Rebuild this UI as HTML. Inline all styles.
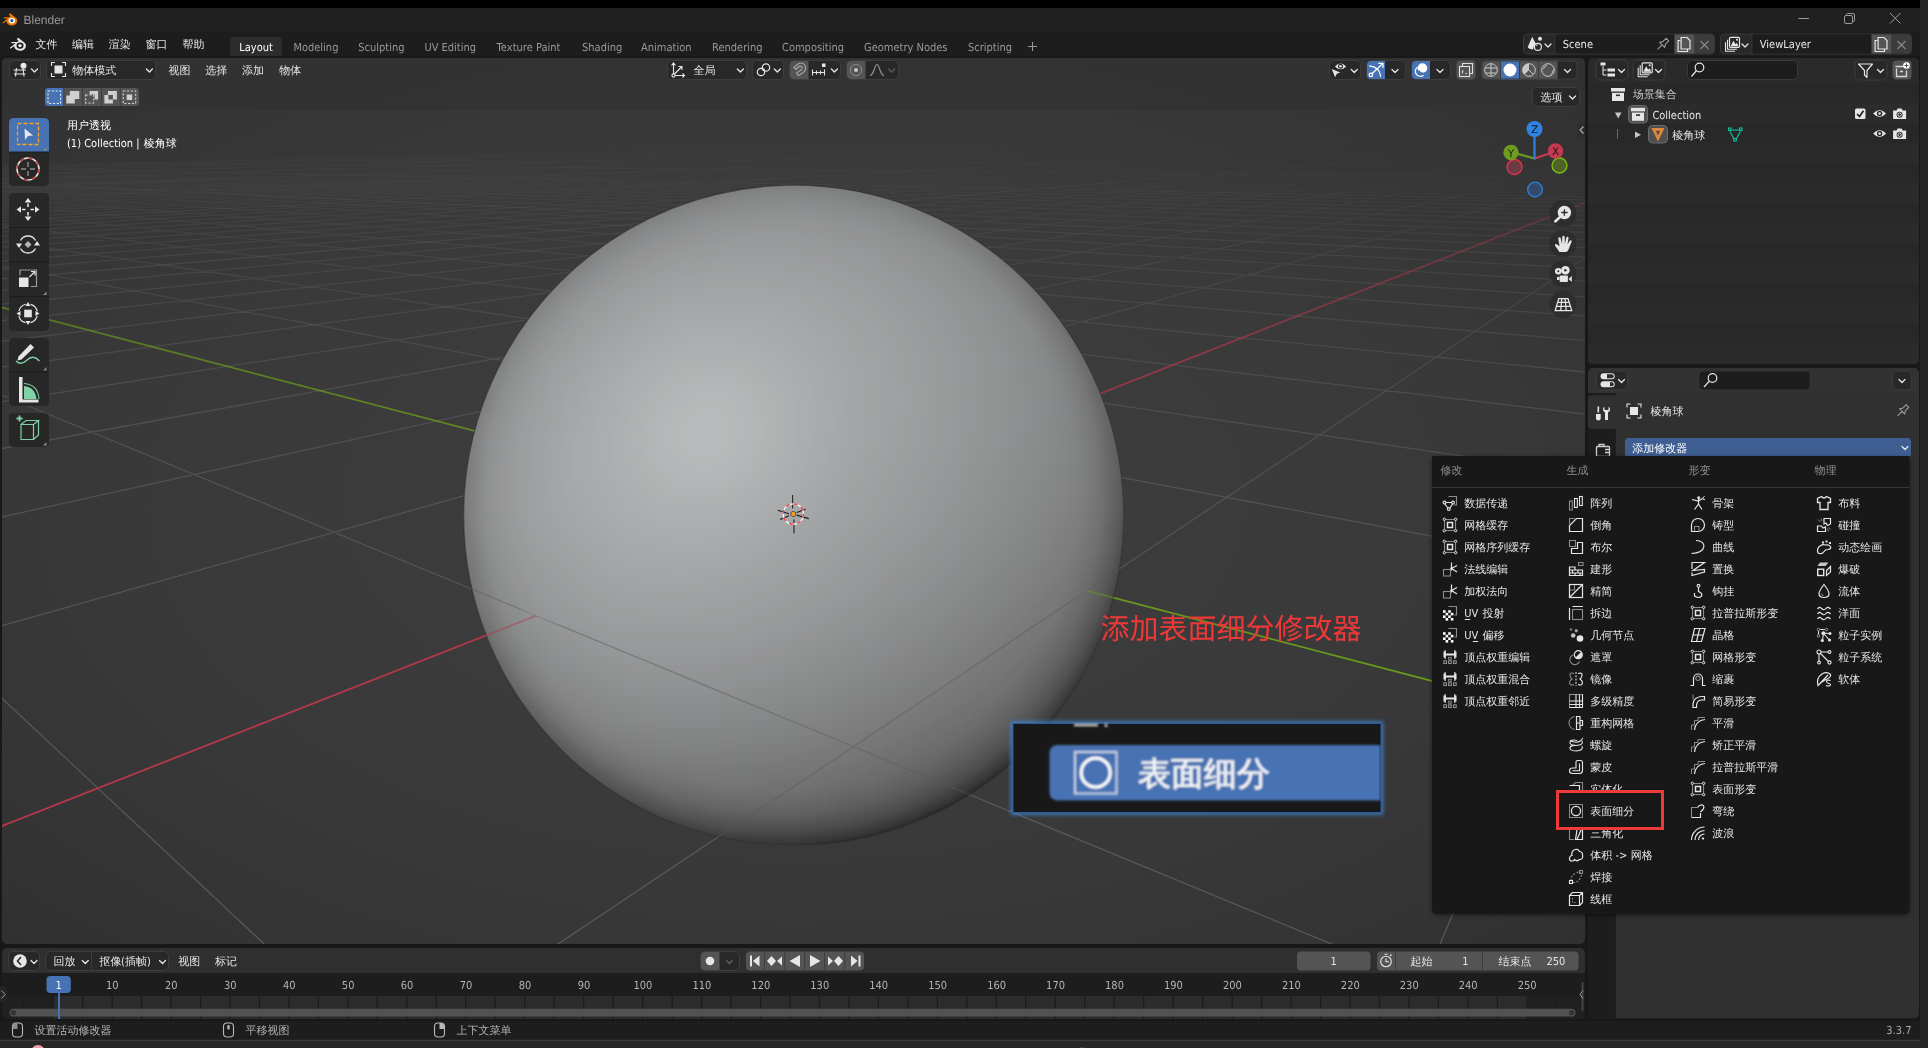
<!DOCTYPE html><html lang="zh"><head><meta charset="utf-8"><title>Blender</title><style>
*{box-sizing:border-box;margin:0;padding:0}
html,body{width:1928px;height:1048px;overflow:hidden;background:#000}
body{position:relative;font-family:"DejaVu Sans","Liberation Sans","WenQuanYi Zen Hei","Noto Sans CJK SC",sans-serif;font-size:11px;color:#e6e6e6;line-height:1}
.a{position:absolute}
.t{position:absolute;white-space:nowrap;line-height:14px;height:14px}
svg{position:absolute;left:0;top:0;overflow:visible;will-change:opacity}
text{text-rendering:geometricPrecision}

</style></head><body>
<div class="a" style="left:0;top:8px;width:1920px;height:23px;background:#202020"></div>
<div class="a" style="left:0;top:31px;width:1920px;height:1009px;background:#181818"></div>
<div class="a" style="left:0;top:31px;width:1920px;height:25px;background:#1d1d1d"></div>
<div class="a" style="left:1920px;top:0;width:8px;height:1048px;background:#262626"></div>
<div class="a" style="left:0;top:1040px;width:1928px;height:8px;background:#262626"></div>
<svg width="1928" height="1048" viewBox="0 0 1928 1048"><defs>
<linearGradient id="gA" gradientUnits="userSpaceOnUse" x1="799.94" y1="38.04" x2="787.09" y2="961.96"><stop offset="0.0000" stop-color="#fff" stop-opacity="0.000"/><stop offset="0.1234" stop-color="#fff" stop-opacity="0.002"/><stop offset="0.1299" stop-color="#fff" stop-opacity="0.012"/><stop offset="0.1364" stop-color="#fff" stop-opacity="0.028"/><stop offset="0.1429" stop-color="#fff" stop-opacity="0.047"/><stop offset="0.1494" stop-color="#fff" stop-opacity="0.068"/><stop offset="0.1558" stop-color="#fff" stop-opacity="0.090"/><stop offset="0.1623" stop-color="#fff" stop-opacity="0.157"/><stop offset="0.1688" stop-color="#fff" stop-opacity="0.174"/><stop offset="0.1753" stop-color="#fff" stop-opacity="0.191"/><stop offset="0.1818" stop-color="#fff" stop-opacity="0.208"/><stop offset="0.1883" stop-color="#fff" stop-opacity="0.225"/><stop offset="0.1948" stop-color="#fff" stop-opacity="0.242"/><stop offset="0.2013" stop-color="#fff" stop-opacity="0.258"/><stop offset="0.2078" stop-color="#fff" stop-opacity="0.274"/><stop offset="0.2143" stop-color="#fff" stop-opacity="0.290"/><stop offset="0.2208" stop-color="#fff" stop-opacity="0.306"/><stop offset="0.2273" stop-color="#fff" stop-opacity="0.321"/><stop offset="0.2338" stop-color="#fff" stop-opacity="0.337"/><stop offset="0.2403" stop-color="#fff" stop-opacity="0.352"/><stop offset="0.2468" stop-color="#fff" stop-opacity="0.366"/><stop offset="0.2532" stop-color="#fff" stop-opacity="0.381"/><stop offset="0.2597" stop-color="#fff" stop-opacity="0.395"/><stop offset="0.2662" stop-color="#fff" stop-opacity="0.409"/><stop offset="0.2727" stop-color="#fff" stop-opacity="0.423"/><stop offset="0.2792" stop-color="#fff" stop-opacity="0.437"/><stop offset="0.2857" stop-color="#fff" stop-opacity="0.450"/><stop offset="0.2922" stop-color="#fff" stop-opacity="0.463"/><stop offset="0.2987" stop-color="#fff" stop-opacity="0.476"/><stop offset="0.3052" stop-color="#fff" stop-opacity="0.489"/><stop offset="0.3117" stop-color="#fff" stop-opacity="0.501"/><stop offset="0.3182" stop-color="#fff" stop-opacity="0.513"/><stop offset="0.3247" stop-color="#fff" stop-opacity="0.525"/><stop offset="0.3312" stop-color="#fff" stop-opacity="0.537"/><stop offset="0.3377" stop-color="#fff" stop-opacity="0.549"/><stop offset="0.3442" stop-color="#fff" stop-opacity="0.560"/><stop offset="0.3506" stop-color="#fff" stop-opacity="0.572"/><stop offset="0.3571" stop-color="#fff" stop-opacity="0.582"/><stop offset="0.3636" stop-color="#fff" stop-opacity="0.593"/><stop offset="0.3701" stop-color="#fff" stop-opacity="0.604"/><stop offset="0.3766" stop-color="#fff" stop-opacity="0.614"/><stop offset="0.3831" stop-color="#fff" stop-opacity="0.624"/><stop offset="0.3896" stop-color="#fff" stop-opacity="0.634"/><stop offset="0.3961" stop-color="#fff" stop-opacity="0.644"/><stop offset="0.4026" stop-color="#fff" stop-opacity="0.654"/><stop offset="0.4091" stop-color="#fff" stop-opacity="0.663"/><stop offset="0.4156" stop-color="#fff" stop-opacity="0.672"/><stop offset="0.4221" stop-color="#fff" stop-opacity="0.681"/><stop offset="0.4286" stop-color="#fff" stop-opacity="0.690"/><stop offset="0.4351" stop-color="#fff" stop-opacity="0.698"/><stop offset="0.4416" stop-color="#fff" stop-opacity="0.707"/><stop offset="0.4481" stop-color="#fff" stop-opacity="0.715"/><stop offset="0.4545" stop-color="#fff" stop-opacity="0.723"/><stop offset="0.4610" stop-color="#fff" stop-opacity="0.731"/><stop offset="0.4675" stop-color="#fff" stop-opacity="0.738"/><stop offset="0.4740" stop-color="#fff" stop-opacity="0.746"/><stop offset="0.4805" stop-color="#fff" stop-opacity="0.753"/><stop offset="0.4870" stop-color="#fff" stop-opacity="0.760"/><stop offset="0.4935" stop-color="#fff" stop-opacity="0.767"/><stop offset="0.5000" stop-color="#fff" stop-opacity="0.774"/><stop offset="0.5065" stop-color="#fff" stop-opacity="0.781"/><stop offset="0.5130" stop-color="#fff" stop-opacity="0.787"/><stop offset="0.5195" stop-color="#fff" stop-opacity="0.794"/><stop offset="0.5260" stop-color="#fff" stop-opacity="0.800"/><stop offset="0.5325" stop-color="#fff" stop-opacity="0.806"/><stop offset="0.5390" stop-color="#fff" stop-opacity="0.812"/><stop offset="0.5455" stop-color="#fff" stop-opacity="0.818"/><stop offset="0.5519" stop-color="#fff" stop-opacity="0.823"/><stop offset="0.5584" stop-color="#fff" stop-opacity="0.829"/><stop offset="0.5649" stop-color="#fff" stop-opacity="0.834"/><stop offset="0.5714" stop-color="#fff" stop-opacity="0.839"/><stop offset="0.5779" stop-color="#fff" stop-opacity="0.844"/><stop offset="0.5844" stop-color="#fff" stop-opacity="0.849"/><stop offset="0.5909" stop-color="#fff" stop-opacity="0.854"/><stop offset="0.5974" stop-color="#fff" stop-opacity="0.858"/><stop offset="0.6039" stop-color="#fff" stop-opacity="0.863"/><stop offset="0.6104" stop-color="#fff" stop-opacity="0.867"/><stop offset="0.6169" stop-color="#fff" stop-opacity="0.872"/><stop offset="0.6234" stop-color="#fff" stop-opacity="0.876"/><stop offset="0.6299" stop-color="#fff" stop-opacity="0.880"/><stop offset="0.6364" stop-color="#fff" stop-opacity="0.884"/><stop offset="0.6429" stop-color="#fff" stop-opacity="0.888"/><stop offset="0.6494" stop-color="#fff" stop-opacity="0.891"/><stop offset="0.6558" stop-color="#fff" stop-opacity="0.895"/><stop offset="0.6623" stop-color="#fff" stop-opacity="0.898"/><stop offset="0.6688" stop-color="#fff" stop-opacity="0.902"/><stop offset="0.6753" stop-color="#fff" stop-opacity="0.905"/><stop offset="0.6818" stop-color="#fff" stop-opacity="0.908"/><stop offset="0.6883" stop-color="#fff" stop-opacity="0.911"/><stop offset="0.6948" stop-color="#fff" stop-opacity="0.914"/><stop offset="0.7013" stop-color="#fff" stop-opacity="0.917"/><stop offset="0.7078" stop-color="#fff" stop-opacity="0.920"/><stop offset="0.7143" stop-color="#fff" stop-opacity="0.923"/><stop offset="0.7208" stop-color="#fff" stop-opacity="0.925"/><stop offset="0.7273" stop-color="#fff" stop-opacity="0.928"/><stop offset="0.7338" stop-color="#fff" stop-opacity="0.931"/><stop offset="0.7403" stop-color="#fff" stop-opacity="0.933"/><stop offset="0.7468" stop-color="#fff" stop-opacity="0.935"/><stop offset="0.7532" stop-color="#fff" stop-opacity="0.938"/><stop offset="0.7597" stop-color="#fff" stop-opacity="0.940"/><stop offset="0.7662" stop-color="#fff" stop-opacity="0.942"/><stop offset="0.7727" stop-color="#fff" stop-opacity="0.944"/><stop offset="0.7792" stop-color="#fff" stop-opacity="0.946"/><stop offset="0.7857" stop-color="#fff" stop-opacity="0.948"/><stop offset="0.7922" stop-color="#fff" stop-opacity="0.950"/><stop offset="0.7987" stop-color="#fff" stop-opacity="0.952"/><stop offset="0.8052" stop-color="#fff" stop-opacity="0.953"/><stop offset="0.8117" stop-color="#fff" stop-opacity="0.955"/><stop offset="0.8182" stop-color="#fff" stop-opacity="0.957"/><stop offset="0.8247" stop-color="#fff" stop-opacity="0.958"/><stop offset="0.8312" stop-color="#fff" stop-opacity="0.960"/><stop offset="0.8377" stop-color="#fff" stop-opacity="0.961"/><stop offset="0.8442" stop-color="#fff" stop-opacity="0.963"/><stop offset="0.8506" stop-color="#fff" stop-opacity="0.964"/><stop offset="0.8571" stop-color="#fff" stop-opacity="0.965"/><stop offset="0.8636" stop-color="#fff" stop-opacity="0.967"/><stop offset="0.8701" stop-color="#fff" stop-opacity="0.968"/><stop offset="0.8766" stop-color="#fff" stop-opacity="0.969"/><stop offset="0.8831" stop-color="#fff" stop-opacity="0.970"/><stop offset="0.8896" stop-color="#fff" stop-opacity="0.971"/><stop offset="0.8961" stop-color="#fff" stop-opacity="0.973"/><stop offset="0.9026" stop-color="#fff" stop-opacity="0.974"/><stop offset="0.9091" stop-color="#fff" stop-opacity="0.975"/><stop offset="0.9156" stop-color="#fff" stop-opacity="0.976"/><stop offset="0.9221" stop-color="#fff" stop-opacity="0.977"/><stop offset="0.9351" stop-color="#fff" stop-opacity="0.978"/><stop offset="0.9416" stop-color="#fff" stop-opacity="0.979"/><stop offset="0.9481" stop-color="#fff" stop-opacity="0.980"/><stop offset="0.9545" stop-color="#fff" stop-opacity="0.981"/><stop offset="0.9675" stop-color="#fff" stop-opacity="0.982"/><stop offset="0.9740" stop-color="#fff" stop-opacity="0.983"/><stop offset="0.9805" stop-color="#fff" stop-opacity="0.984"/><stop offset="0.9935" stop-color="#fff" stop-opacity="0.985"/><stop offset="1.0000" stop-color="#fff" stop-opacity="0.985"/></linearGradient>
<linearGradient id="gB" gradientUnits="userSpaceOnUse" x1="799.94" y1="38.04" x2="787.09" y2="961.96"><stop offset="0.0000" stop-color="#fff" stop-opacity="0.000"/><stop offset="0.1104" stop-color="#fff" stop-opacity="0.008"/><stop offset="0.1169" stop-color="#fff" stop-opacity="0.028"/><stop offset="0.1234" stop-color="#fff" stop-opacity="0.047"/><stop offset="0.1299" stop-color="#fff" stop-opacity="0.066"/><stop offset="0.1364" stop-color="#fff" stop-opacity="0.084"/><stop offset="0.1429" stop-color="#fff" stop-opacity="0.103"/><stop offset="0.1494" stop-color="#fff" stop-opacity="0.121"/><stop offset="0.1558" stop-color="#fff" stop-opacity="0.139"/><stop offset="0.1623" stop-color="#fff" stop-opacity="0.157"/><stop offset="0.1688" stop-color="#fff" stop-opacity="0.174"/><stop offset="0.1753" stop-color="#fff" stop-opacity="0.191"/><stop offset="0.1818" stop-color="#fff" stop-opacity="0.208"/><stop offset="0.1883" stop-color="#fff" stop-opacity="0.225"/><stop offset="0.1948" stop-color="#fff" stop-opacity="0.242"/><stop offset="0.2013" stop-color="#fff" stop-opacity="0.258"/><stop offset="0.2078" stop-color="#fff" stop-opacity="0.274"/><stop offset="0.2143" stop-color="#fff" stop-opacity="0.290"/><stop offset="0.2208" stop-color="#fff" stop-opacity="0.306"/><stop offset="0.2273" stop-color="#fff" stop-opacity="0.321"/><stop offset="0.2338" stop-color="#fff" stop-opacity="0.337"/><stop offset="0.2403" stop-color="#fff" stop-opacity="0.352"/><stop offset="0.2468" stop-color="#fff" stop-opacity="0.366"/><stop offset="0.2532" stop-color="#fff" stop-opacity="0.381"/><stop offset="0.2597" stop-color="#fff" stop-opacity="0.395"/><stop offset="0.2662" stop-color="#fff" stop-opacity="0.409"/><stop offset="0.2727" stop-color="#fff" stop-opacity="0.423"/><stop offset="0.2792" stop-color="#fff" stop-opacity="0.437"/><stop offset="0.2857" stop-color="#fff" stop-opacity="0.450"/><stop offset="0.2922" stop-color="#fff" stop-opacity="0.463"/><stop offset="0.2987" stop-color="#fff" stop-opacity="0.476"/><stop offset="0.3052" stop-color="#fff" stop-opacity="0.489"/><stop offset="0.3117" stop-color="#fff" stop-opacity="0.501"/><stop offset="0.3182" stop-color="#fff" stop-opacity="0.513"/><stop offset="0.3247" stop-color="#fff" stop-opacity="0.525"/><stop offset="0.3312" stop-color="#fff" stop-opacity="0.537"/><stop offset="0.3377" stop-color="#fff" stop-opacity="0.549"/><stop offset="0.3442" stop-color="#fff" stop-opacity="0.560"/><stop offset="0.3506" stop-color="#fff" stop-opacity="0.572"/><stop offset="0.3571" stop-color="#fff" stop-opacity="0.582"/><stop offset="0.3636" stop-color="#fff" stop-opacity="0.593"/><stop offset="0.3701" stop-color="#fff" stop-opacity="0.604"/><stop offset="0.3766" stop-color="#fff" stop-opacity="0.614"/><stop offset="0.3831" stop-color="#fff" stop-opacity="0.624"/><stop offset="0.3896" stop-color="#fff" stop-opacity="0.634"/><stop offset="0.3961" stop-color="#fff" stop-opacity="0.644"/><stop offset="0.4026" stop-color="#fff" stop-opacity="0.654"/><stop offset="0.4091" stop-color="#fff" stop-opacity="0.663"/><stop offset="0.4156" stop-color="#fff" stop-opacity="0.672"/><stop offset="0.4221" stop-color="#fff" stop-opacity="0.681"/><stop offset="0.4286" stop-color="#fff" stop-opacity="0.690"/><stop offset="0.4351" stop-color="#fff" stop-opacity="0.698"/><stop offset="0.4416" stop-color="#fff" stop-opacity="0.707"/><stop offset="0.4481" stop-color="#fff" stop-opacity="0.715"/><stop offset="0.4545" stop-color="#fff" stop-opacity="0.723"/><stop offset="0.4610" stop-color="#fff" stop-opacity="0.731"/><stop offset="0.4675" stop-color="#fff" stop-opacity="0.738"/><stop offset="0.4740" stop-color="#fff" stop-opacity="0.746"/><stop offset="0.4805" stop-color="#fff" stop-opacity="0.753"/><stop offset="0.4870" stop-color="#fff" stop-opacity="0.760"/><stop offset="0.4935" stop-color="#fff" stop-opacity="0.767"/><stop offset="0.5000" stop-color="#fff" stop-opacity="0.774"/><stop offset="0.5065" stop-color="#fff" stop-opacity="0.781"/><stop offset="0.5130" stop-color="#fff" stop-opacity="0.787"/><stop offset="0.5195" stop-color="#fff" stop-opacity="0.794"/><stop offset="0.5260" stop-color="#fff" stop-opacity="0.800"/><stop offset="0.5325" stop-color="#fff" stop-opacity="0.806"/><stop offset="0.5390" stop-color="#fff" stop-opacity="0.812"/><stop offset="0.5455" stop-color="#fff" stop-opacity="0.818"/><stop offset="0.5519" stop-color="#fff" stop-opacity="0.823"/><stop offset="0.5584" stop-color="#fff" stop-opacity="0.829"/><stop offset="0.5649" stop-color="#fff" stop-opacity="0.834"/><stop offset="0.5714" stop-color="#fff" stop-opacity="0.839"/><stop offset="0.5779" stop-color="#fff" stop-opacity="0.844"/><stop offset="0.5844" stop-color="#fff" stop-opacity="0.849"/><stop offset="0.5909" stop-color="#fff" stop-opacity="0.854"/><stop offset="0.5974" stop-color="#fff" stop-opacity="0.858"/><stop offset="0.6039" stop-color="#fff" stop-opacity="0.863"/><stop offset="0.6104" stop-color="#fff" stop-opacity="0.867"/><stop offset="0.6169" stop-color="#fff" stop-opacity="0.872"/><stop offset="0.6234" stop-color="#fff" stop-opacity="0.876"/><stop offset="0.6299" stop-color="#fff" stop-opacity="0.880"/><stop offset="0.6364" stop-color="#fff" stop-opacity="0.884"/><stop offset="0.6429" stop-color="#fff" stop-opacity="0.888"/><stop offset="0.6494" stop-color="#fff" stop-opacity="0.891"/><stop offset="0.6558" stop-color="#fff" stop-opacity="0.895"/><stop offset="0.6623" stop-color="#fff" stop-opacity="0.898"/><stop offset="0.6688" stop-color="#fff" stop-opacity="0.902"/><stop offset="0.6753" stop-color="#fff" stop-opacity="0.905"/><stop offset="0.6818" stop-color="#fff" stop-opacity="0.908"/><stop offset="0.6883" stop-color="#fff" stop-opacity="0.911"/><stop offset="0.6948" stop-color="#fff" stop-opacity="0.914"/><stop offset="0.7013" stop-color="#fff" stop-opacity="0.917"/><stop offset="0.7078" stop-color="#fff" stop-opacity="0.920"/><stop offset="0.7143" stop-color="#fff" stop-opacity="0.923"/><stop offset="0.7208" stop-color="#fff" stop-opacity="0.925"/><stop offset="0.7273" stop-color="#fff" stop-opacity="0.928"/><stop offset="0.7338" stop-color="#fff" stop-opacity="0.931"/><stop offset="0.7403" stop-color="#fff" stop-opacity="0.933"/><stop offset="0.7468" stop-color="#fff" stop-opacity="0.935"/><stop offset="0.7532" stop-color="#fff" stop-opacity="0.938"/><stop offset="0.7597" stop-color="#fff" stop-opacity="0.940"/><stop offset="0.7662" stop-color="#fff" stop-opacity="0.942"/><stop offset="0.7727" stop-color="#fff" stop-opacity="0.944"/><stop offset="0.7792" stop-color="#fff" stop-opacity="0.946"/><stop offset="0.7857" stop-color="#fff" stop-opacity="0.948"/><stop offset="0.7922" stop-color="#fff" stop-opacity="0.950"/><stop offset="0.7987" stop-color="#fff" stop-opacity="0.952"/><stop offset="0.8052" stop-color="#fff" stop-opacity="0.953"/><stop offset="0.8117" stop-color="#fff" stop-opacity="0.955"/><stop offset="0.8182" stop-color="#fff" stop-opacity="0.957"/><stop offset="0.8247" stop-color="#fff" stop-opacity="0.958"/><stop offset="0.8312" stop-color="#fff" stop-opacity="0.960"/><stop offset="0.8377" stop-color="#fff" stop-opacity="0.961"/><stop offset="0.8442" stop-color="#fff" stop-opacity="0.963"/><stop offset="0.8506" stop-color="#fff" stop-opacity="0.964"/><stop offset="0.8571" stop-color="#fff" stop-opacity="0.965"/><stop offset="0.8636" stop-color="#fff" stop-opacity="0.967"/><stop offset="0.8701" stop-color="#fff" stop-opacity="0.968"/><stop offset="0.8766" stop-color="#fff" stop-opacity="0.969"/><stop offset="0.8831" stop-color="#fff" stop-opacity="0.970"/><stop offset="0.8896" stop-color="#fff" stop-opacity="0.971"/><stop offset="0.8961" stop-color="#fff" stop-opacity="0.973"/><stop offset="0.9026" stop-color="#fff" stop-opacity="0.974"/><stop offset="0.9091" stop-color="#fff" stop-opacity="0.975"/><stop offset="0.9156" stop-color="#fff" stop-opacity="0.976"/><stop offset="0.9221" stop-color="#fff" stop-opacity="0.977"/><stop offset="0.9351" stop-color="#fff" stop-opacity="0.978"/><stop offset="0.9416" stop-color="#fff" stop-opacity="0.979"/><stop offset="0.9481" stop-color="#fff" stop-opacity="0.980"/><stop offset="0.9545" stop-color="#fff" stop-opacity="0.981"/><stop offset="0.9675" stop-color="#fff" stop-opacity="0.982"/><stop offset="0.9740" stop-color="#fff" stop-opacity="0.983"/><stop offset="0.9805" stop-color="#fff" stop-opacity="0.984"/><stop offset="0.9935" stop-color="#fff" stop-opacity="0.985"/><stop offset="1.0000" stop-color="#fff" stop-opacity="0.985"/></linearGradient>
<linearGradient id="gC" gradientUnits="userSpaceOnUse" x1="799.94" y1="38.04" x2="787.09" y2="961.96"><stop offset="0.0000" stop-color="#fff" stop-opacity="0.000"/><stop offset="0.1104" stop-color="#fff" stop-opacity="0.029"/><stop offset="0.1169" stop-color="#fff" stop-opacity="0.071"/><stop offset="0.1234" stop-color="#fff" stop-opacity="0.106"/><stop offset="0.1299" stop-color="#fff" stop-opacity="0.136"/><stop offset="0.1364" stop-color="#fff" stop-opacity="0.164"/><stop offset="0.1429" stop-color="#fff" stop-opacity="0.191"/><stop offset="0.1494" stop-color="#fff" stop-opacity="0.215"/><stop offset="0.1558" stop-color="#fff" stop-opacity="0.239"/><stop offset="0.1623" stop-color="#fff" stop-opacity="0.261"/><stop offset="0.1688" stop-color="#fff" stop-opacity="0.283"/><stop offset="0.1753" stop-color="#fff" stop-opacity="0.304"/><stop offset="0.1818" stop-color="#fff" stop-opacity="0.324"/><stop offset="0.1883" stop-color="#fff" stop-opacity="0.343"/><stop offset="0.1948" stop-color="#fff" stop-opacity="0.362"/><stop offset="0.2013" stop-color="#fff" stop-opacity="0.380"/><stop offset="0.2078" stop-color="#fff" stop-opacity="0.398"/><stop offset="0.2143" stop-color="#fff" stop-opacity="0.415"/><stop offset="0.2208" stop-color="#fff" stop-opacity="0.432"/><stop offset="0.2273" stop-color="#fff" stop-opacity="0.448"/><stop offset="0.2338" stop-color="#fff" stop-opacity="0.464"/><stop offset="0.2403" stop-color="#fff" stop-opacity="0.479"/><stop offset="0.2468" stop-color="#fff" stop-opacity="0.494"/><stop offset="0.2532" stop-color="#fff" stop-opacity="0.509"/><stop offset="0.2597" stop-color="#fff" stop-opacity="0.523"/><stop offset="0.2662" stop-color="#fff" stop-opacity="0.537"/><stop offset="0.2727" stop-color="#fff" stop-opacity="0.551"/><stop offset="0.2792" stop-color="#fff" stop-opacity="0.564"/><stop offset="0.2857" stop-color="#fff" stop-opacity="0.577"/><stop offset="0.2922" stop-color="#fff" stop-opacity="0.589"/><stop offset="0.2987" stop-color="#fff" stop-opacity="0.602"/><stop offset="0.3052" stop-color="#fff" stop-opacity="0.614"/><stop offset="0.3117" stop-color="#fff" stop-opacity="0.625"/><stop offset="0.3182" stop-color="#fff" stop-opacity="0.637"/><stop offset="0.3247" stop-color="#fff" stop-opacity="0.648"/><stop offset="0.3312" stop-color="#fff" stop-opacity="0.659"/><stop offset="0.3377" stop-color="#fff" stop-opacity="0.670"/><stop offset="0.3442" stop-color="#fff" stop-opacity="0.680"/><stop offset="0.3506" stop-color="#fff" stop-opacity="0.690"/><stop offset="0.3571" stop-color="#fff" stop-opacity="0.700"/><stop offset="0.3636" stop-color="#fff" stop-opacity="0.710"/><stop offset="0.3701" stop-color="#fff" stop-opacity="0.719"/><stop offset="0.3766" stop-color="#fff" stop-opacity="0.728"/><stop offset="0.3831" stop-color="#fff" stop-opacity="0.737"/><stop offset="0.3896" stop-color="#fff" stop-opacity="0.746"/><stop offset="0.3961" stop-color="#fff" stop-opacity="0.755"/><stop offset="0.4026" stop-color="#fff" stop-opacity="0.763"/><stop offset="0.4091" stop-color="#fff" stop-opacity="0.771"/><stop offset="0.4156" stop-color="#fff" stop-opacity="0.779"/><stop offset="0.4221" stop-color="#fff" stop-opacity="0.787"/><stop offset="0.4286" stop-color="#fff" stop-opacity="0.795"/><stop offset="0.4351" stop-color="#fff" stop-opacity="0.802"/><stop offset="0.4416" stop-color="#fff" stop-opacity="0.809"/><stop offset="0.4481" stop-color="#fff" stop-opacity="0.816"/><stop offset="0.4545" stop-color="#fff" stop-opacity="0.823"/><stop offset="0.4610" stop-color="#fff" stop-opacity="0.830"/><stop offset="0.4675" stop-color="#fff" stop-opacity="0.836"/><stop offset="0.4740" stop-color="#fff" stop-opacity="0.843"/><stop offset="0.4805" stop-color="#fff" stop-opacity="0.849"/><stop offset="0.4870" stop-color="#fff" stop-opacity="0.855"/><stop offset="0.4935" stop-color="#fff" stop-opacity="0.861"/><stop offset="0.5000" stop-color="#fff" stop-opacity="0.867"/><stop offset="0.5065" stop-color="#fff" stop-opacity="0.872"/><stop offset="0.5130" stop-color="#fff" stop-opacity="0.878"/><stop offset="0.5195" stop-color="#fff" stop-opacity="0.883"/><stop offset="0.5260" stop-color="#fff" stop-opacity="0.888"/><stop offset="0.5325" stop-color="#fff" stop-opacity="0.893"/><stop offset="0.5390" stop-color="#fff" stop-opacity="0.898"/><stop offset="0.5455" stop-color="#fff" stop-opacity="0.903"/><stop offset="0.5519" stop-color="#fff" stop-opacity="0.907"/><stop offset="0.5584" stop-color="#fff" stop-opacity="0.912"/><stop offset="0.5649" stop-color="#fff" stop-opacity="0.916"/><stop offset="0.5714" stop-color="#fff" stop-opacity="0.921"/><stop offset="0.5779" stop-color="#fff" stop-opacity="0.925"/><stop offset="0.5844" stop-color="#fff" stop-opacity="0.929"/><stop offset="0.5909" stop-color="#fff" stop-opacity="0.933"/><stop offset="0.5974" stop-color="#fff" stop-opacity="0.936"/><stop offset="0.6039" stop-color="#fff" stop-opacity="0.940"/><stop offset="0.6104" stop-color="#fff" stop-opacity="0.944"/><stop offset="0.6169" stop-color="#fff" stop-opacity="0.947"/><stop offset="0.6234" stop-color="#fff" stop-opacity="0.951"/><stop offset="0.6299" stop-color="#fff" stop-opacity="0.954"/><stop offset="0.6364" stop-color="#fff" stop-opacity="0.957"/><stop offset="0.6429" stop-color="#fff" stop-opacity="0.960"/><stop offset="0.6494" stop-color="#fff" stop-opacity="0.963"/><stop offset="0.6558" stop-color="#fff" stop-opacity="0.966"/><stop offset="0.6623" stop-color="#fff" stop-opacity="0.969"/><stop offset="0.6688" stop-color="#fff" stop-opacity="0.972"/><stop offset="0.6753" stop-color="#fff" stop-opacity="0.974"/><stop offset="0.6818" stop-color="#fff" stop-opacity="0.977"/><stop offset="0.6883" stop-color="#fff" stop-opacity="0.979"/><stop offset="0.6948" stop-color="#fff" stop-opacity="0.982"/><stop offset="0.7013" stop-color="#fff" stop-opacity="0.984"/><stop offset="0.7078" stop-color="#fff" stop-opacity="0.986"/><stop offset="0.7143" stop-color="#fff" stop-opacity="0.989"/><stop offset="0.7208" stop-color="#fff" stop-opacity="0.991"/><stop offset="0.7273" stop-color="#fff" stop-opacity="0.993"/><stop offset="0.7338" stop-color="#fff" stop-opacity="0.995"/><stop offset="0.7403" stop-color="#fff" stop-opacity="0.997"/><stop offset="0.7468" stop-color="#fff" stop-opacity="0.999"/><stop offset="0.7532" stop-color="#fff" stop-opacity="1.000"/><stop offset="1.0000" stop-color="#fff" stop-opacity="1.000"/></linearGradient>
<mask id="mC" maskUnits="userSpaceOnUse" x="0" y="0" width="1928" height="1048"><rect x="0" y="0" width="1928" height="1048" fill="url(#gC)"/></mask>
<mask id="mA" maskUnits="userSpaceOnUse" x="0" y="0" width="1928" height="1048"><rect x="0" y="0" width="1928" height="1048" fill="url(#gA)"/></mask>
<mask id="mB" maskUnits="userSpaceOnUse" x="0" y="0" width="1928" height="1048"><rect x="0" y="0" width="1928" height="1048" fill="url(#gB)"/></mask>
<clipPath id="cSph"><ellipse cx="793.7" cy="515.4" rx="330.0" ry="330.1"/></clipPath>
<clipPath id="cFront"><polygon points="425.8,547.2 465.8,553.2 466.3,556.2 467.1,559.3 468.2,562.3 469.5,565.4 471.1,568.5 473.0,571.5 475.1,574.6 477.5,577.7 480.3,580.7 483.3,583.8 486.6,586.8 490.2,589.9 494.1,592.9 498.3,595.8 502.8,598.8 507.6,601.7 512.7,604.6 518.1,607.4 523.8,610.2 529.8,613.0 536.1,615.6 542.7,618.3 549.6,620.9 556.8,623.4 564.3,625.8 572.1,628.2 580.1,630.5 588.4,632.7 597.0,634.8 605.8,636.9 614.9,638.8 624.2,640.6 633.7,642.4 643.5,644.0 653.4,645.5 663.6,647.0 673.9,648.3 684.4,649.5 695.1,650.5 705.9,651.5 716.8,652.3 727.8,653.0 738.9,653.5 750.1,654.0 761.4,654.3 772.7,654.4 784.1,654.5 795.4,654.4 806.8,654.2 818.1,653.8 829.4,653.3 840.7,652.7 851.9,652.0 863.0,651.1 874.0,650.1 884.9,649.0 895.7,647.8 906.3,646.4 916.7,644.9 927.0,643.4 937.2,641.7 947.1,639.9 956.8,638.0 966.3,635.9 975.5,633.9 984.6,631.7 993.3,629.4 1001.8,627.0 1010.1,624.6 1018.1,622.1 1025.8,619.5 1033.2,616.8 1040.3,614.1 1047.2,611.4 1053.7,608.5 1060.0,605.7 1065.9,602.8 1071.6,599.8 1076.9,596.8 1081.9,593.8 1086.7,590.8 1091.1,587.7 1095.2,584.6 1099.1,581.5 1102.6,578.4 1105.8,575.2 1108.7,572.1 1111.4,569.0 1113.7,565.8 1115.8,562.7 1117.6,559.6 1119.1,556.5 1120.4,553.4 1121.3,550.3 1122.1,547.2 1122.5,544.2 1162.5,538.2 1182.5,954.0 405.8,954.0"/></clipPath>
<clipPath id="cView"><rect x="2" y="58" width="1583" height="886" rx="5"/></clipPath>
<radialGradient id="gBg" gradientUnits="userSpaceOnUse" cx="793.5" cy="501.0" r="1119.3" gradientTransform="translate(793.5 501.0) scale(1 0.5597) translate(-793.5 -501.0)"><stop offset="0" stop-color="#3d3d3d"/><stop offset="0.2" stop-color="#3d3d3d"/><stop offset="0.3" stop-color="#3c3c3c"/><stop offset="0.4" stop-color="#3b3b3b"/><stop offset="0.5" stop-color="#3a3a3a"/><stop offset="0.6" stop-color="#393939"/><stop offset="0.7" stop-color="#373737"/><stop offset="0.8" stop-color="#353535"/><stop offset="0.9" stop-color="#333333"/><stop offset="1" stop-color="#303030"/></radialGradient>
<radialGradient id="gSphR" gradientUnits="userSpaceOnUse" cx="781.7" cy="495.4" r="355.0"><stop offset="0.84" stop-color="#000" stop-opacity="0"/><stop offset="0.9" stop-color="#000" stop-opacity="0.06"/><stop offset="0.95" stop-color="#040302" stop-opacity="0.18"/><stop offset="0.98" stop-color="#080604" stop-opacity="0.36"/><stop offset="1" stop-color="#0a0806" stop-opacity="0.62"/></radialGradient>
</defs>
<g clip-path="url(#cView)">
<rect x="2" y="58" width="1583" height="886" fill="url(#gBg)"/>
<g mask="url(#mA)"><path id="pgA" d="M269.5 949.0L-3.0 693.6M1438.0 949.0L1590.0 588.2M1343.7 949.0L-3.0 393.1M550.5 949.0L1590.0 254.5M1590.0 566.0L-3.0 264.9M-3.0 627.1L1590.0 178.8M1590.0 474.7L-3.0 240.7M-3.0 518.0L1590.0 166.9M1590.0 414.8L-3.0 224.9M-3.0 449.4L1590.0 159.4M1590.0 372.5L-3.0 213.7M-3.0 402.3L1590.0 154.2M1590.0 341.0L-3.0 205.4M-3.0 367.9L1590.0 150.4M1590.0 316.6L-3.0 198.9M-3.0 341.8L1590.0 147.6M1590.0 297.3L-3.0 193.8M-3.0 321.2L1590.0 145.3M1590.0 281.5L-3.0 189.6M-3.0 304.6L1579.5 144.6M1590.0 268.3L-3.0 186.2M-3.0 290.9L1561.5 144.7M1590.0 247.8L-3.0 180.7M-3.0 269.6L1526.5 144.9M1590.0 239.6L-3.0 178.6M-3.0 261.2L1509.4 145.0M1590.0 232.5L-3.0 176.7M-3.0 253.9L1492.5 145.1M1590.0 226.1L-3.0 175.0M-3.0 247.4L1476.0 145.2M1590.0 220.6L-3.0 173.5M-3.0 241.8L1459.7 145.2M1590.0 215.6L-3.0 172.2M-3.0 236.7L1443.7 145.3M1590.0 211.1L-3.0 171.0M-3.0 232.2L1427.9 145.4M1590.0 207.0L-3.0 169.9M-3.0 228.1L1412.3 145.5M1590.0 203.3L-3.0 169.0M-3.0 224.3L1397.0 145.6M1590.0 196.8L-3.0 167.2M-3.0 217.9L1367.1 145.8M1590.0 194.0L-3.0 166.5M-3.0 215.0L1352.5 145.8M1590.0 191.4L5.8 165.9M-3.0 212.4L1338.1 145.9M1590.0 189.0L22.6 165.5M-3.0 210.0L1323.9 146.0M1590.0 186.7L39.1 165.2M-3.0 207.8L1310.0 146.1M1590.0 184.6L55.3 164.8M-3.0 205.7L1296.2 146.2M1590.0 182.7L71.2 164.4M-3.0 203.7L1282.6 146.2M1590.0 180.9L86.8 164.0M-3.0 201.9L1269.2 146.3M1590.0 179.1L102.2 163.7M-3.0 200.2L1256.0 146.4M1590.0 176.0L132.0 162.9M-3.0 197.1L1230.2 146.5M1590.0 174.6L146.5 162.6M-3.0 195.7L1217.6 146.6M1590.0 173.3L160.8 162.3M-3.0 194.4L1205.1 146.7M1590.0 172.0L174.9 161.9M-3.0 193.1L1192.9 146.7M1590.0 170.8L188.6 161.6M-3.0 191.9L1180.7 146.8M1590.0 169.6L202.2 161.3M-3.0 190.8L1168.8 146.9M1590.0 168.6L215.5 161.0M-3.0 189.7L1157.0 146.9M1590.0 167.5L228.6 160.7M-3.0 188.7L1145.4 147.0M1590.0 166.5L241.5 160.4M-3.0 187.7L1133.9 147.1M1590.0 164.7L266.7 159.8M-3.0 185.9L1111.4 147.2M1590.0 163.9L278.9 159.5M-3.0 185.1L1100.3 147.2M1590.0 163.0L291.0 159.2M-3.0 184.3L1089.4 147.3M1590.0 162.3L302.9 158.9M-3.0 183.5L1078.7 147.4M1590.0 161.5L314.6 158.6M-3.0 182.8L1068.1 147.4M1590.0 160.8L326.1 158.3M-3.0 182.1L1057.6 147.5M1590.0 160.1L337.4 158.1M-3.0 181.4L1047.3 147.5M1590.0 159.4L348.6 157.8M-3.0 180.8L1037.1 147.6M1590.0 158.8L359.6 157.6M-3.0 180.1L1027.0 147.7M1590.0 157.6L381.1 157.0M-3.0 179.0L1007.2 147.8M-3.0 178.4L997.5 147.8M-3.0 177.9L987.9 147.9M-3.0 177.3L978.4 147.9M-3.0 176.8L969.0 148.0M-3.0 176.4L959.8 148.0M-3.0 175.9L950.6 148.1M-3.0 175.4L941.6 148.1M-3.0 175.0L932.7 148.2M-3.0 174.2L915.1 148.3M-3.0 173.8L906.5 148.3M-3.0 173.4L898.0 148.4M-3.0 173.0L889.5 148.4M-3.0 172.7L881.2 148.5M-3.0 172.3L873.0 148.5M-3.0 172.0L864.8 148.6M-3.0 171.6L856.8 148.6M-3.0 171.3L848.8 148.7M-3.0 170.7L833.2 148.7M-3.0 170.4L825.5 148.8M-3.0 170.1L817.8 148.8M-3.0 169.8L810.3 148.9M-3.0 169.5L802.8 148.9M-3.0 169.3L795.5 148.9M-3.0 169.0L788.2 149.0M-3.0 168.8L781.0 149.0M-3.0 168.5L773.8 149.1M-3.0 168.0L759.7 149.1M-3.0 167.8L752.8 149.2M-3.0 167.6L746.0 149.2M-3.0 167.4L739.2 149.3M-3.0 167.2L732.5 149.3M-3.0 166.9L725.8 149.3M-3.0 166.7L719.3 149.4M-3.0 166.5L712.8 149.4M-3.0 166.3L706.3 149.4" stroke="#5a5a5a" stroke-width="1.25" fill="none"/></g>
<g mask="url(#mB)"><path id="pgB" d="M1590.0 257.3L-3.0 183.2M-3.0 279.4L1543.8 144.8M1590.0 199.9L-3.0 168.1M-3.0 221.0L1382.0 145.7M1590.0 177.5L117.2 163.3M-3.0 198.6L1243.1 146.5M1590.0 165.6L254.2 160.1M-3.0 186.8L1122.5 147.1M1590.0 158.2L370.4 157.3M-3.0 179.5L1017.0 147.7M1590.0 153.1L470.2 154.9M-3.0 174.6L923.8 148.2M1590.0 149.5L556.9 152.9M-3.0 171.0L840.9 148.7M1590.0 146.7L632.8 151.1M-3.0 168.3L766.7 149.1M1590.0 144.5L699.9 149.5M-3.0 166.1L699.9 149.5" stroke="#626262" stroke-width="1.25" fill="none"/></g>
<g mask="url(#mC)"><path id="pax" d="M-3.0 827.9L1590.0 200.8" stroke="#b2384b" stroke-width="1.8"/><path id="pay" d="M1590.0 722.2L-3.0 306.2" stroke="#6b9c1c" stroke-width="1.8"/></g>
<ellipse cx="793.7" cy="515.4" rx="330.0" ry="330.1" fill="#8c8d8d"/>
<filter id="fSm" filterUnits="userSpaceOnUse" x="422" y="150" width="732" height="726"><feGaussianBlur stdDeviation="7"/></filter>
<g clip-path="url(#cSph)"><g filter="url(#fSm)" shape-rendering="crispEdges">
<path fill="#4f4f4f" d="M928 800h32v16h-32zM896 816h64v16h-64zM848 832h112v16h-112zM848 848h80v16h-80zM848 864h32v16h-32z"/>
<path fill="#505050" d="M960 784h16v16h-16zM960 800h32v16h-32zM960 816h32v16h-32zM816 832h32v16h-32zM816 848h32v16h-32zM816 864h32v16h-32z"/>
<path fill="#515151" d="M976 784h32v16h-32zM992 800h16v16h-16zM800 832h16v16h-16zM800 848h16v16h-16zM800 864h16v16h-16z"/>
<path fill="#525252" d="M992 768h16v16h-16zM1008 784h16v16h-16zM880 816h16v16h-16zM784 848h16v16h-16zM784 864h16v16h-16z"/>
<path fill="#535353" d="M1008 752h16v16h-16zM1008 768h32v16h-32zM1024 784h16v16h-16zM768 832h32v16h-32zM768 848h16v16h-16zM768 864h16v16h-16z"/>
<path fill="#545454" d="M1024 752h16v16h-16zM976 768h16v16h-16zM1040 768h16v16h-16zM752 832h16v16h-16zM752 848h16v16h-16zM752 864h16v16h-16z"/>
<path fill="#555555" d="M1024 736h16v16h-16zM1040 752h16v16h-16zM912 800h16v16h-16zM736 832h16v16h-16zM736 848h16v16h-16zM736 864h16v16h-16z"/>
<path fill="#565656" d="M1040 736h32v16h-32zM1056 752h16v16h-16zM944 784h16v16h-16zM864 816h16v16h-16zM720 832h16v16h-16zM720 848h16v16h-16zM720 864h16v16h-16z"/>
<path fill="#575757" d="M1040 720h32v16h-32zM1072 736h16v16h-16zM992 752h16v16h-16zM704 848h16v16h-16zM704 864h16v16h-16z"/>
<path fill="#585858" d="M1072 720h16v16h-16zM704 832h16v16h-16z"/>
<path fill="#595959" d="M1056 704h32v16h-32zM848 816h16v16h-16zM688 832h16v16h-16zM688 848h16v16h-16z"/>
<path fill="#5a5a5a" d="M1056 688h16v16h-16zM1088 704h16v16h-16zM1008 736h16v16h-16zM960 768h16v16h-16zM896 800h16v16h-16zM672 848h16v16h-16z"/>
<path fill="#5b5b5b" d="M1072 688h32v16h-32zM1040 704h16v16h-16zM1024 720h16v16h-16zM928 784h16v16h-16zM672 816h16v16h-16zM832 816h16v16h-16zM672 832h16v16h-16zM656 848h16v16h-16z"/>
<path fill="#5c5c5c" d="M1072 672h16v16h-16zM1104 688h16v16h-16zM688 816h16v16h-16zM656 832h16v16h-16z"/>
<path fill="#5d5d5d" d="M1088 672h32v16h-32zM880 800h16v16h-16zM656 816h16v16h-16zM816 816h16v16h-16zM640 832h16v16h-16z"/>
<path fill="#5e5e5e" d="M1088 656h16v16h-16zM976 752h16v16h-16zM640 816h16v16h-16z"/>
<path fill="#5f5f5f" d="M1088 640h16v16h-16zM1104 656h32v16h-32zM944 768h16v16h-16zM912 784h16v16h-16zM640 800h16v16h-16zM624 816h16v16h-16zM704 816h16v16h-16zM800 816h16v16h-16zM624 832h16v16h-16z"/>
<path fill="#606060" d="M1104 640h16v16h-16zM1072 656h16v16h-16zM992 736h16v16h-16zM624 800h16v16h-16zM864 800h16v16h-16zM784 816h16v16h-16z"/>
<path fill="#616161" d="M1120 640h16v16h-16zM1008 720h16v16h-16zM608 816h16v16h-16zM720 816h64v16h-64z"/>
<path fill="#626262" d="M1088 624h48v16h-48zM1056 672h16v16h-16zM1024 704h16v16h-16zM960 752h16v16h-16zM896 784h16v16h-16zM608 800h16v16h-16zM848 800h16v16h-16zM592 816h16v16h-16z"/>
<path fill="#636363" d="M1104 608h16v16h-16zM1040 688h16v16h-16zM928 768h16v16h-16zM608 784h16v16h-16zM592 800h16v16h-16zM656 800h16v16h-16z"/>
<path fill="#646464" d="M1120 608h32v16h-32zM976 736h16v16h-16zM592 784h16v16h-16zM832 800h16v16h-16z"/>
<path fill="#656565" d="M1104 592h32v16h-32zM944 752h16v16h-16zM880 784h16v16h-16zM576 800h16v16h-16z"/>
<path fill="#666666" d="M1104 576h16v16h-16zM1136 592h16v16h-16zM1072 640h16v16h-16zM992 720h16v16h-16zM592 768h16v16h-16zM912 768h16v16h-16zM576 784h16v16h-16zM816 800h16v16h-16z"/>
<path fill="#676767" d="M1120 576h32v16h-32zM1056 656h16v16h-16zM1008 704h16v16h-16zM576 768h16v16h-16zM560 784h16v16h-16zM624 784h16v16h-16zM864 784h16v16h-16zM672 800h16v16h-16zM800 800h16v16h-16z"/>
<path fill="#686868" d="M1120 560h16v16h-16zM1088 608h16v16h-16zM1040 672h16v16h-16zM1024 688h16v16h-16zM960 736h16v16h-16zM560 768h16v16h-16zM896 768h16v16h-16z"/>
<path fill="#696969" d="M1136 560h16v16h-16zM560 752h16v16h-16zM928 752h16v16h-16zM544 768h16v16h-16zM848 784h16v16h-16zM688 800h16v16h-16zM784 800h16v16h-16z"/>
<path fill="#6a6a6a" d="M1120 544h32v16h-32zM1104 560h16v16h-16zM976 720h16v16h-16zM704 800h16v16h-16zM752 800h32v16h-32z"/>
<path fill="#6b6b6b" d="M1072 624h16v16h-16zM992 704h16v16h-16zM944 736h16v16h-16zM544 752h16v16h-16zM912 752h16v16h-16zM528 768h16v16h-16zM880 768h16v16h-16zM832 784h16v16h-16zM720 800h32v16h-32z"/>
<path fill="#6c6c6c" d="M1120 528h32v16h-32zM1088 592h16v16h-16zM1056 640h16v16h-16zM1040 656h16v16h-16zM1024 672h16v16h-16zM1008 688h16v16h-16zM544 736h16v16h-16zM528 752h16v16h-16zM576 752h16v16h-16zM640 784h16v16h-16z"/>
<path fill="#6d6d6d" d="M1120 512h32v16h-32zM960 720h16v16h-16zM528 736h16v16h-16zM512 752h16v16h-16zM864 768h16v16h-16zM816 784h16v16h-16z"/>
<path fill="#6e6e6e" d="M1104 544h16v16h-16zM1072 608h16v16h-16zM976 704h16v16h-16zM528 720h16v16h-16zM512 736h16v16h-16zM928 736h16v16h-16zM896 752h16v16h-16zM608 768h16v16h-16zM800 784h16v16h-16z"/>
<path fill="#6f6f6f" d="M1120 496h32v16h-32zM1088 576h16v16h-16zM992 688h16v16h-16zM512 720h16v16h-16zM560 736h16v16h-16zM848 768h16v16h-16zM656 784h16v16h-16zM784 784h16v16h-16z"/>
<path fill="#707070" d="M1120 480h32v16h-32zM1104 528h16v16h-16zM1056 624h16v16h-16zM1040 640h16v16h-16zM1024 656h16v16h-16zM1008 672h16v16h-16zM496 720h16v16h-16zM944 720h16v16h-16zM912 736h16v16h-16zM880 752h16v16h-16zM672 784h16v16h-16zM768 784h16v16h-16z"/>
<path fill="#717171" d="M1136 464h16v16h-16zM512 704h32v16h-32zM960 704h16v16h-16zM544 720h16v16h-16zM832 768h16v16h-16zM688 784h16v16h-16zM752 784h16v16h-16z"/>
<path fill="#727272" d="M1120 464h16v16h-16zM1104 512h16v16h-16zM1088 560h16v16h-16zM1072 592h16v16h-16zM512 688h16v16h-16zM480 704h32v16h-32zM928 720h16v16h-16zM864 752h16v16h-16zM624 768h16v16h-16zM816 768h16v16h-16zM704 784h48v16h-48z"/>
<path fill="#737373" d="M1120 448h32v16h-32zM1056 608h16v16h-16zM992 672h16v16h-16zM496 688h16v16h-16zM976 688h16v16h-16zM896 736h16v16h-16zM592 752h16v16h-16z"/>
<path fill="#747474" d="M1120 432h32v16h-32zM1104 448h16v16h-16zM1104 496h16v16h-16zM1040 624h16v16h-16zM1024 640h16v16h-16zM1008 656h16v16h-16zM496 672h16v16h-16zM480 688h16v16h-16zM944 704h16v16h-16zM848 752h16v16h-16zM800 768h16v16h-16z"/>
<path fill="#747575" d="M1104 432h16v16h-16zM1104 480h16v16h-16z"/>
<path fill="#757575" d="M1136 416h16v16h-16zM1104 464h16v16h-16zM1088 544h16v16h-16zM1072 576h16v16h-16zM480 672h16v16h-16zM960 688h16v16h-16zM912 720h16v16h-16zM880 736h16v16h-16zM640 768h16v16h-16zM784 768h16v16h-16z"/>
<path fill="#757576" d="M1120 416h16v16h-16z"/>
<path fill="#757676" d="M496 656h16v16h-16zM464 672h16v16h-16z"/>
<path fill="#767676" d="M1136 400h16v16h-16zM1104 416h16v16h-16zM1056 592h16v16h-16zM480 656h16v16h-16zM976 672h16v16h-16zM832 752h16v16h-16zM656 768h16v16h-16zM768 768h16v16h-16z"/>
<path fill="#767777" d="M1120 400h16v16h-16zM928 704h16v16h-16z"/>
<path fill="#777777" d="M1104 400h16v16h-16zM1088 528h16v16h-16zM1072 560h16v16h-16zM1040 608h16v16h-16zM1024 624h16v16h-16zM1008 640h16v16h-16zM464 656h16v16h-16zM992 656h16v16h-16zM896 720h16v16h-16zM576 736h16v16h-16zM864 736h16v16h-16zM608 752h16v16h-16zM752 768h16v16h-16z"/>
<path fill="#777778" d="M672 768h16v16h-16z"/>
<path fill="#777878" d="M1120 384h16v16h-16zM480 640h16v16h-16zM816 752h16v16h-16zM736 768h16v16h-16z"/>
<path fill="#787878" d="M1104 384h16v16h-16zM464 640h16v16h-16zM944 688h16v16h-16zM688 768h48v16h-48z"/>
<path fill="#787879" d="M1088 384h16v16h-16z"/>
<path fill="#787979" d="M1120 368h16v16h-16zM448 640h16v16h-16z"/>
<path fill="#797979" d="M1088 368h32v16h-32zM1088 512h16v16h-16zM1056 576h16v16h-16zM464 624h32v16h-32zM960 672h16v16h-16zM912 704h16v16h-16zM880 720h16v16h-16zM848 736h16v16h-16zM800 752h16v16h-16z"/>
<path fill="#797a7a" d="M1104 352h16v16h-16zM1072 544h16v16h-16zM1040 592h16v16h-16zM448 624h16v16h-16zM976 656h16v16h-16zM560 720h16v16h-16zM624 752h16v16h-16z"/>
<path fill="#7a7a7a" d="M1088 352h16v16h-16zM992 640h16v16h-16zM512 672h16v16h-16zM784 752h16v16h-16z"/>
<path fill="#7a7a7b" d="M1088 496h16v16h-16zM464 608h16v16h-16zM1024 608h16v16h-16zM1008 624h16v16h-16zM928 688h16v16h-16z"/>
<path fill="#7a7b7b" d="M1104 336h16v16h-16zM1072 352h16v16h-16zM1088 400h16v16h-16zM448 608h16v16h-16zM832 736h16v16h-16z"/>
<path fill="#7b7b7b" d="M1088 336h16v16h-16zM896 704h16v16h-16zM864 720h16v16h-16zM592 736h16v16h-16z"/>
<path fill="#7b7b7c" d="M1072 336h16v16h-16zM1056 560h16v16h-16zM544 704h16v16h-16zM768 752h16v16h-16z"/>
<path fill="#7b7c7c" d="M1088 320h16v16h-16zM1088 480h16v16h-16zM1072 528h16v16h-16zM448 592h32v16h-32zM944 672h16v16h-16zM528 688h16v16h-16zM640 752h16v16h-16z"/>
<path fill="#7c7c7c" d="M1088 304h16v16h-16zM1072 320h16v16h-16zM432 592h16v16h-16zM816 736h16v16h-16zM752 752h16v16h-16z"/>
<path fill="#7c7c7d" d="M1056 320h16v16h-16zM1088 416h16v16h-16zM1088 464h16v16h-16zM1040 576h16v16h-16zM960 656h16v16h-16z"/>
<path fill="#7c7d7d" d="M1072 304h16v16h-16zM1088 432h16v16h-16zM1088 448h16v16h-16zM448 576h32v16h-32zM912 688h16v16h-16zM656 752h16v16h-16zM736 752h16v16h-16z"/>
<path fill="#7d7d7d" d="M1072 288h16v16h-16zM1056 304h16v16h-16zM432 576h16v16h-16zM1024 592h16v16h-16zM976 640h16v16h-16zM880 704h16v16h-16zM848 720h16v16h-16z"/>
<path fill="#7d7d7e" d="M1056 288h16v16h-16zM1040 304h16v16h-16zM1072 512h16v16h-16zM1056 544h16v16h-16zM1008 608h16v16h-16zM992 624h16v16h-16zM672 752h16v16h-16zM720 752h16v16h-16z"/>
<path fill="#7d7e7e" d="M1056 272h16v16h-16zM1040 288h16v16h-16zM448 560h32v16h-32zM928 672h16v16h-16zM608 736h16v16h-16zM800 736h16v16h-16zM688 752h32v16h-32z"/>
<path fill="#7e7e7e" d="M432 560h16v16h-16z"/>
<path fill="#7e7e7f" d="M1040 272h16v16h-16zM480 608h16v16h-16zM576 720h16v16h-16z"/>
<path fill="#7e7f7f" d="M1024 256h32v16h-32zM1024 272h16v16h-16zM1072 368h16v16h-16zM1072 496h16v16h-16zM432 544h32v16h-32zM1040 560h16v16h-16zM496 640h16v16h-16zM944 656h16v16h-16zM896 688h16v16h-16zM832 720h16v16h-16zM784 736h16v16h-16z"/>
<path fill="#7f7f7f" d="M1024 240h16v16h-16zM864 704h16v16h-16z"/>
<path fill="#7f7f80" d="M1008 240h16v16h-16zM992 256h32v16h-32zM1024 288h16v16h-16zM1056 528h16v16h-16z"/>
<path fill="#7f8080" d="M992 208h16v16h-16zM976 224h48v16h-48zM976 240h32v16h-32zM1056 336h16v16h-16zM432 528h32v16h-32zM1024 576h16v16h-16zM1008 592h16v16h-16zM992 608h16v16h-16zM976 624h16v16h-16zM960 640h16v16h-16zM912 672h16v16h-16zM624 736h16v16h-16zM768 736h16v16h-16z"/>
<path fill="#808081" d="M960 192h16v16h-16zM944 208h48v16h-48zM960 224h16v16h-16zM1008 272h16v16h-16zM1072 480h16v16h-16zM432 512h32v16h-32zM816 720h16v16h-16z"/>
<path fill="#808181" d="M752 160h160v16h-160zM752 176h192v16h-192zM864 192h96v16h-96zM912 208h32v16h-32zM944 224h16v16h-16zM1072 384h16v16h-16zM432 496h32v16h-32zM464 544h16v16h-16zM1040 544h16v16h-16zM880 688h16v16h-16zM560 704h16v16h-16zM848 704h16v16h-16zM752 736h16v16h-16z"/>
<path fill="#808182" d="M736 160h16v16h-16zM736 176h16v16h-16zM1072 464h16v16h-16zM1056 512h16v16h-16zM928 656h16v16h-16z"/>
<path fill="#818182" d="M688 160h48v16h-48zM688 176h48v16h-48zM688 192h32v16h-32zM640 736h16v16h-16z"/>
<path fill="#818282" d="M672 160h16v16h-16zM640 176h48v16h-48zM624 192h64v16h-64zM640 208h32v16h-32zM1072 400h16v16h-16zM1072 448h16v16h-16zM432 480h32v16h-32zM1024 560h16v16h-16zM944 640h16v16h-16zM512 656h16v16h-16zM592 720h16v16h-16zM800 720h16v16h-16zM736 736h16v16h-16z"/>
<path fill="#818283" d="M608 192h16v16h-16zM624 208h16v16h-16zM624 224h16v16h-16zM1072 432h16v16h-16zM432 464h32v16h-32zM896 672h16v16h-16zM656 736h16v16h-16zM720 736h16v16h-16z"/>
<path fill="#828283" d="M592 208h32v16h-32zM608 224h16v16h-16zM1072 416h16v16h-16zM1008 576h16v16h-16zM960 624h16v16h-16zM544 688h16v16h-16z"/>
<path fill="#828383" d="M576 208h16v16h-16zM560 224h48v16h-48zM560 240h48v16h-48zM576 256h16v16h-16zM1056 352h16v16h-16zM432 432h32v16h-32zM432 448h48v16h-48zM1056 496h16v16h-16zM1040 528h16v16h-16zM992 592h16v16h-16zM976 608h16v16h-16zM528 672h16v16h-16zM864 688h16v16h-16zM832 704h16v16h-16zM784 720h16v16h-16zM672 736h48v16h-48z"/>
<path fill="#828384" d="M544 240h16v16h-16zM544 256h32v16h-32zM560 272h16v16h-16zM1040 320h16v16h-16zM432 416h16v16h-16zM464 432h16v16h-16zM464 464h16v16h-16z"/>
<path fill="#838384" d="M528 256h16v16h-16zM528 272h32v16h-32zM544 288h16v16h-16zM448 416h32v16h-32zM464 528h16v16h-16zM912 656h16v16h-16z"/>
<path fill="#838484" d="M512 272h16v16h-16zM496 288h48v16h-48zM496 304h48v16h-48zM480 320h48v16h-48zM464 336h48v16h-48zM464 352h48v16h-48zM448 368h48v16h-48zM448 384h48v16h-48zM448 400h32v16h-32zM1056 480h16v16h-16zM1024 544h16v16h-16zM608 720h16v16h-16z"/>
<path fill="#838485" d="M480 592h16v16h-16zM928 640h16v16h-16zM880 672h16v16h-16zM816 704h16v16h-16zM768 720h16v16h-16z"/>
<path fill="#848485" d="M1040 512h16v16h-16zM576 704h16v16h-16z"/>
<path fill="#848585" d="M720 192h16v16h-16zM848 192h16v16h-16zM1056 368h16v16h-16zM1056 464h16v16h-16zM464 480h16v16h-16zM464 512h16v16h-16zM1008 560h16v16h-16zM992 576h16v16h-16zM496 624h16v16h-16zM944 624h16v16h-16zM848 688h16v16h-16z"/>
<path fill="#848586" d="M960 240h16v16h-16zM480 400h16v16h-16zM976 592h16v16h-16zM960 608h16v16h-16zM624 720h16v16h-16zM752 720h16v16h-16z"/>
<path fill="#858586" d="M1024 304h16v16h-16zM464 496h16v16h-16zM896 656h16v16h-16z"/>
<path fill="#858686" d="M1056 384h16v16h-16zM1056 448h16v16h-16zM1040 496h16v16h-16zM1024 528h16v16h-16zM800 704h16v16h-16zM736 720h16v16h-16z"/>
<path fill="#858687" d="M896 208h16v16h-16zM1040 336h16v16h-16zM1056 400h16v16h-16zM1056 432h16v16h-16zM912 640h16v16h-16zM864 672h16v16h-16zM832 688h16v16h-16zM640 720h16v16h-16z"/>
<path fill="#868687" d="M560 688h16v16h-16z"/>
<path fill="#868787" d="M832 192h16v16h-16zM976 256h16v16h-16zM1008 288h16v16h-16zM512 336h16v16h-16zM1056 416h16v16h-16zM1008 544h16v16h-16zM592 704h16v16h-16zM784 704h16v16h-16zM656 720h16v16h-16zM720 720h16v16h-16z"/>
<path fill="#868788" d="M736 192h16v16h-16zM672 208h16v16h-16zM928 224h16v16h-16zM992 272h16v16h-16zM1040 480h16v16h-16zM1024 512h16v16h-16zM992 560h16v16h-16zM944 608h16v16h-16zM928 624h16v16h-16zM512 640h16v16h-16zM880 656h16v16h-16zM672 720h48v16h-48z"/>
<path fill="#868888" d="M608 240h16v16h-16zM976 576h16v16h-16z"/>
<path fill="#878888" d="M960 592h16v16h-16zM544 672h16v16h-16zM848 672h16v16h-16zM816 688h16v16h-16z"/>
<path fill="#878889" d="M816 192h16v16h-16zM1040 352h16v16h-16zM1040 464h16v16h-16zM1008 528h16v16h-16zM480 576h16v16h-16zM896 640h16v16h-16zM528 656h16v16h-16zM768 704h16v16h-16z"/>
<path fill="#888989" d="M752 192h16v16h-16zM1024 320h16v16h-16zM496 368h16v16h-16zM1024 496h16v16h-16zM608 704h16v16h-16z"/>
<path fill="#88898a" d="M800 192h16v16h-16zM640 224h16v16h-16zM1040 368h16v16h-16zM1040 448h16v16h-16zM992 544h16v16h-16zM496 608h16v16h-16zM912 624h16v16h-16zM864 656h16v16h-16zM576 688h16v16h-16zM800 688h16v16h-16zM752 704h16v16h-16z"/>
<path fill="#888a8a" d="M768 192h16v16h-16zM880 208h16v16h-16zM832 672h16v16h-16z"/>
<path fill="#898a8a" d="M784 192h16v16h-16zM944 240h16v16h-16zM1040 384h16v16h-16zM1040 432h16v16h-16zM976 560h16v16h-16zM960 576h16v16h-16zM944 592h16v16h-16zM928 608h16v16h-16z"/>
<path fill="#898a8b" d="M1008 304h16v16h-16zM1040 400h16v16h-16zM1040 416h16v16h-16zM1024 480h16v16h-16zM1008 512h16v16h-16zM880 640h16v16h-16zM624 704h16v16h-16zM736 704h16v16h-16z"/>
<path fill="#898b8b" d="M1024 336h16v16h-16zM784 688h16v16h-16zM720 704h16v16h-16z"/>
<path fill="#8a8b8b" d="M912 224h16v16h-16zM480 416h16v16h-16zM640 704h16v16h-16z"/>
<path fill="#8a8b8c" d="M688 208h16v16h-16zM592 256h16v16h-16zM960 256h16v16h-16zM992 288h16v16h-16zM528 320h16v16h-16zM1024 464h16v16h-16zM1008 496h16v16h-16zM992 528h16v16h-16zM480 560h16v16h-16zM896 624h16v16h-16zM848 656h16v16h-16zM560 672h16v16h-16zM816 672h16v16h-16zM656 704h64v16h-64z"/>
<path fill="#8a8c8c" d="M976 272h16v16h-16zM976 544h16v16h-16zM592 688h16v16h-16zM768 688h16v16h-16z"/>
<path fill="#8b8c8c" d="M912 608h16v16h-16zM512 624h16v16h-16z"/>
<path fill="#8b8c8d" d="M864 208h16v16h-16zM1024 352h16v16h-16zM1024 448h16v16h-16zM960 560h16v16h-16zM944 576h16v16h-16zM928 592h16v16h-16zM864 640h16v16h-16zM544 656h16v16h-16z"/>
<path fill="#8b8d8d" d="M1008 320h16v16h-16zM1024 368h16v16h-16zM1024 432h16v16h-16zM1008 480h16v16h-16zM992 512h16v16h-16zM528 640h16v16h-16zM832 656h16v16h-16zM800 672h16v16h-16zM752 688h16v16h-16z"/>
<path fill="#8c8d8e" d="M928 240h16v16h-16zM576 272h16v16h-16zM544 304h16v16h-16zM1024 384h16v16h-16zM1024 400h16v16h-16zM1024 416h16v16h-16zM976 528h16v16h-16zM496 592h16v16h-16zM880 624h16v16h-16zM608 688h16v16h-16z"/>
<path fill="#8c8e8e" d="M896 224h16v16h-16zM1008 464h16v16h-16zM480 544h16v16h-16zM896 608h16v16h-16zM576 672h16v16h-16zM736 688h16v16h-16z"/>
<path fill="#8d8e8f" d="M704 208h16v16h-16zM848 208h16v16h-16zM656 224h16v16h-16zM624 240h16v16h-16zM560 288h16v16h-16zM992 304h16v16h-16zM1008 336h16v16h-16zM480 432h16v16h-16zM992 496h16v16h-16zM960 544h16v16h-16zM944 560h16v16h-16zM928 576h16v16h-16zM912 592h16v16h-16zM848 640h16v16h-16zM816 656h16v16h-16zM784 672h16v16h-16zM624 688h16v16h-16zM720 688h16v16h-16z"/>
<path fill="#8d8f8f" d="M944 256h16v16h-16zM976 288h16v16h-16zM512 352h16v16h-16zM496 384h16v16h-16zM1008 448h16v16h-16z"/>
<path fill="#8d8f90" d="M640 688h16v16h-16zM704 688h16v16h-16z"/>
<path fill="#8e8f90" d="M832 208h16v16h-16zM960 272h16v16h-16zM1008 352h16v16h-16zM1008 432h16v16h-16zM992 480h16v16h-16zM976 512h16v16h-16zM480 528h16v16h-16zM864 624h16v16h-16zM560 656h16v16h-16zM768 672h16v16h-16zM656 688h48v16h-48z"/>
<path fill="#8e9090" d="M720 208h16v16h-16zM992 320h16v16h-16zM1008 368h16v16h-16zM960 528h16v16h-16zM512 608h16v16h-16zM880 608h16v16h-16zM832 640h16v16h-16zM800 656h16v16h-16zM592 672h16v16h-16z"/>
<path fill="#8e9091" d="M880 224h16v16h-16zM1008 416h16v16h-16zM480 448h16v16h-16z"/>
<path fill="#8f9091" d="M816 208h16v16h-16zM912 240h16v16h-16zM1008 384h16v16h-16zM1008 400h16v16h-16zM992 464h16v16h-16zM976 496h16v16h-16zM944 544h16v16h-16zM928 560h16v16h-16zM496 576h16v16h-16zM912 576h16v16h-16zM896 592h16v16h-16zM528 624h16v16h-16zM544 640h16v16h-16zM752 672h16v16h-16z"/>
<path fill="#8f9191" d="M480 512h16v16h-16z"/>
<path fill="#8f9192" d="M736 208h16v16h-16zM976 304h16v16h-16zM992 336h16v16h-16zM848 624h16v16h-16z"/>
<path fill="#909192" d="M752 208h16v16h-16zM800 208h16v16h-16zM672 224h16v16h-16zM608 256h16v16h-16zM928 256h16v16h-16zM992 448h16v16h-16zM480 464h16v16h-16zM480 480h16v16h-16zM480 496h16v16h-16zM960 512h16v16h-16zM816 640h16v16h-16zM784 656h16v16h-16zM608 672h16v16h-16zM736 672h16v16h-16z"/>
<path fill="#909292" d="M768 208h32v16h-32zM960 288h16v16h-16zM976 480h16v16h-16zM864 608h16v16h-16zM576 656h16v16h-16z"/>
<path fill="#909293" d="M864 224h16v16h-16zM944 272h16v16h-16zM992 352h16v16h-16zM992 432h16v16h-16zM944 528h16v16h-16zM624 672h16v16h-16zM720 672h16v16h-16z"/>
<path fill="#919293" d="M640 240h16v16h-16zM896 240h16v16h-16zM976 320h16v16h-16zM528 336h16v16h-16zM992 368h16v16h-16zM496 400h16v16h-16zM992 416h16v16h-16zM928 544h16v16h-16zM896 576h16v16h-16zM880 592h16v16h-16zM832 624h16v16h-16zM768 656h16v16h-16zM704 672h16v16h-16z"/>
<path fill="#919393" d="M992 384h16v16h-16zM992 400h16v16h-16zM976 464h16v16h-16zM960 496h16v16h-16zM496 560h16v16h-16zM912 560h16v16h-16zM512 592h16v16h-16zM800 640h16v16h-16zM640 672h16v16h-16z"/>
<path fill="#919394" d="M656 672h48v16h-48z"/>
<path fill="#929394" d="M688 224h16v16h-16zM848 224h16v16h-16zM592 272h16v16h-16zM944 512h16v16h-16zM848 608h16v16h-16zM560 640h16v16h-16zM592 656h16v16h-16zM752 656h16v16h-16z"/>
<path fill="#929494" d="M912 256h16v16h-16zM960 304h16v16h-16zM976 336h16v16h-16zM512 368h16v16h-16zM976 448h16v16h-16z"/>
<path fill="#929495" d="M880 240h16v16h-16zM928 272h16v16h-16zM944 288h16v16h-16zM544 320h16v16h-16zM960 480h16v16h-16zM928 528h16v16h-16zM864 592h16v16h-16zM528 608h16v16h-16zM544 624h16v16h-16zM816 624h16v16h-16zM784 640h16v16h-16z"/>
<path fill="#939495" d="M576 288h16v16h-16zM976 352h16v16h-16zM976 432h16v16h-16zM912 544h16v16h-16zM880 576h16v16h-16zM736 656h16v16h-16z"/>
<path fill="#939595" d="M832 224h16v16h-16zM496 544h16v16h-16zM896 560h16v16h-16zM608 656h16v16h-16z"/>
<path fill="#939596" d="M704 224h16v16h-16zM560 304h16v16h-16zM960 320h16v16h-16zM976 368h16v16h-16zM976 384h16v16h-16zM976 400h16v16h-16zM496 416h16v16h-16zM976 416h16v16h-16zM960 464h16v16h-16zM944 496h16v16h-16zM832 608h16v16h-16zM576 640h16v16h-16zM720 656h16v16h-16z"/>
<path fill="#949596" d="M656 240h16v16h-16zM624 256h16v16h-16zM512 576h16v16h-16zM800 624h16v16h-16zM768 640h16v16h-16zM624 656h16v16h-16z"/>
<path fill="#949696" d="M816 224h16v16h-16zM896 256h16v16h-16z"/>
<path fill="#949697" d="M720 224h16v16h-16zM864 240h16v16h-16zM912 272h16v16h-16zM944 304h16v16h-16zM960 336h16v16h-16zM960 448h16v16h-16zM944 480h16v16h-16zM928 512h16v16h-16zM496 528h16v16h-16zM912 528h16v16h-16zM864 576h16v16h-16zM848 592h16v16h-16zM640 656h32v16h-32zM688 656h32v16h-32z"/>
<path fill="#959697" d="M800 224h16v16h-16zM928 288h16v16h-16zM896 544h16v16h-16zM880 560h16v16h-16zM560 624h16v16h-16zM752 640h16v16h-16zM672 656h16v16h-16z"/>
<path fill="#959797" d="M960 432h16v16h-16z"/>
<path fill="#959798" d="M736 224h64v16h-64zM848 240h16v16h-16zM944 320h16v16h-16zM528 352h16v16h-16zM960 352h16v16h-16zM960 368h16v16h-16zM512 384h16v16h-16zM960 400h16v16h-16zM960 416h16v16h-16zM496 432h16v16h-16zM944 464h16v16h-16zM928 496h16v16h-16zM528 592h16v16h-16zM544 608h16v16h-16zM816 608h16v16h-16zM784 624h16v16h-16zM592 640h16v16h-16zM736 640h16v16h-16z"/>
<path fill="#969798" d="M880 256h16v16h-16zM960 384h16v16h-16zM496 512h16v16h-16zM832 592h16v16h-16z"/>
<path fill="#969898" d="M672 240h16v16h-16zM608 272h16v16h-16zM512 560h16v16h-16z"/>
<path fill="#969899" d="M896 272h16v16h-16zM912 288h16v16h-16zM928 304h16v16h-16zM944 336h16v16h-16zM496 448h16v16h-16zM944 448h16v16h-16zM496 464h16v16h-16zM928 480h16v16h-16zM496 496h16v16h-16zM912 512h16v16h-16zM896 528h16v16h-16zM864 560h16v16h-16zM848 576h16v16h-16zM800 608h16v16h-16zM576 624h16v16h-16zM768 624h16v16h-16zM608 640h16v16h-16zM720 640h16v16h-16z"/>
<path fill="#979899" d="M832 240h16v16h-16zM640 256h16v16h-16zM544 336h16v16h-16zM496 480h16v16h-16zM880 544h16v16h-16z"/>
<path fill="#97999a" d="M688 240h16v16h-16zM864 256h16v16h-16zM592 288h16v16h-16zM560 320h16v16h-16zM928 320h16v16h-16zM944 352h16v16h-16zM944 368h16v16h-16zM512 400h16v16h-16zM944 416h16v16h-16zM944 432h16v16h-16zM928 464h16v16h-16zM912 496h16v16h-16zM528 576h16v16h-16zM816 592h16v16h-16zM560 608h16v16h-16zM752 624h16v16h-16zM624 640h96v16h-96z"/>
<path fill="#98999a" d="M816 240h16v16h-16zM944 400h16v16h-16zM512 544h16v16h-16zM784 608h16v16h-16z"/>
<path fill="#989a9a" d="M944 384h16v16h-16z"/>
<path fill="#989a9b" d="M704 240h16v16h-16zM800 240h16v16h-16zM848 256h16v16h-16zM880 272h16v16h-16zM896 288h16v16h-16zM576 304h16v16h-16zM912 304h16v16h-16zM928 336h16v16h-16zM528 368h16v16h-16zM928 448h16v16h-16zM912 480h16v16h-16zM896 512h16v16h-16zM880 528h16v16h-16zM864 544h16v16h-16zM848 560h16v16h-16zM832 576h16v16h-16zM544 592h16v16h-16zM592 624h16v16h-16zM736 624h16v16h-16z"/>
<path fill="#999b9c" d="M720 240h80v16h-80zM656 256h16v16h-16zM624 272h16v16h-16zM864 272h16v16h-16zM912 320h16v16h-16zM928 352h16v16h-16zM928 368h16v16h-16zM512 416h16v16h-16zM928 416h16v16h-16zM928 432h16v16h-16zM912 464h16v16h-16zM896 496h16v16h-16zM512 528h16v16h-16zM528 560h16v16h-16zM816 576h16v16h-16zM800 592h16v16h-16zM576 608h16v16h-16zM768 608h16v16h-16zM608 624h16v16h-16zM720 624h16v16h-16z"/>
<path fill="#9a9c9d" d="M672 256h16v16h-16zM832 256h16v16h-16zM608 288h16v16h-16zM880 288h16v16h-16zM896 304h16v16h-16zM912 336h16v16h-16zM544 352h16v16h-16zM528 384h16v16h-16zM928 384h16v16h-16zM928 400h16v16h-16zM512 432h16v16h-16zM912 448h16v16h-16zM896 480h16v16h-16zM512 512h16v16h-16zM880 512h16v16h-16zM864 528h16v16h-16zM848 544h16v16h-16zM832 560h16v16h-16zM544 576h16v16h-16zM560 592h16v16h-16zM784 592h16v16h-16zM752 608h16v16h-16zM624 624h96v16h-96z"/>
<path fill="#9b9d9e" d="M816 256h16v16h-16zM640 272h16v16h-16zM848 272h16v16h-16zM592 304h16v16h-16zM576 320h16v16h-16zM896 320h16v16h-16zM560 336h16v16h-16zM912 352h16v16h-16zM912 368h16v16h-16zM912 416h16v16h-16zM912 432h16v16h-16zM512 448h16v16h-16zM512 464h16v16h-16zM896 464h16v16h-16zM512 480h16v16h-16zM512 496h16v16h-16zM880 496h16v16h-16zM528 544h16v16h-16zM800 576h16v16h-16zM768 592h16v16h-16zM592 608h16v16h-16zM736 608h16v16h-16z"/>
<path fill="#9c9e9f" d="M688 256h32v16h-32zM784 256h32v16h-32zM832 272h16v16h-16zM864 288h16v16h-16zM880 304h16v16h-16zM896 336h16v16h-16zM912 384h16v16h-16zM528 400h16v16h-16zM912 400h16v16h-16zM896 448h16v16h-16zM880 480h16v16h-16zM864 512h16v16h-16zM848 528h16v16h-16zM832 544h16v16h-16zM544 560h16v16h-16zM816 560h16v16h-16zM560 576h16v16h-16zM784 576h16v16h-16zM576 592h16v16h-16zM752 592h16v16h-16zM608 608h32v16h-32zM704 608h32v16h-32z"/>
<path fill="#9d9fa0" d="M720 256h64v16h-64zM656 272h16v16h-16zM816 272h16v16h-16zM624 288h16v16h-16zM848 288h16v16h-16zM864 304h16v16h-16zM880 320h16v16h-16zM896 352h16v16h-16zM544 368h16v16h-16zM896 368h16v16h-16zM896 416h16v16h-16zM896 432h16v16h-16zM880 464h16v16h-16zM864 496h16v16h-16zM528 528h16v16h-16zM800 560h16v16h-16zM592 592h16v16h-16zM736 592h16v16h-16zM640 608h64v16h-64z"/>
<path fill="#9ea0a1" d="M672 272h16v16h-16zM800 272h16v16h-16zM832 288h16v16h-16zM608 304h16v16h-16zM880 336h16v16h-16zM560 352h16v16h-16zM896 384h16v16h-16zM896 400h16v16h-16zM528 416h16v16h-16zM880 448h16v16h-16zM864 480h16v16h-16zM528 512h16v16h-16zM848 512h16v16h-16zM832 528h16v16h-16zM544 544h16v16h-16zM816 544h16v16h-16zM560 560h16v16h-16zM576 576h16v16h-16zM768 576h16v16h-16zM608 592h16v16h-16zM720 592h16v16h-16z"/>
<path fill="#9fa1a2" d="M688 272h16v16h-16zM784 272h16v16h-16zM640 288h16v16h-16zM848 304h16v16h-16zM592 320h16v16h-16zM864 320h16v16h-16zM576 336h16v16h-16zM880 352h16v16h-16zM880 368h16v16h-16zM544 384h16v16h-16zM880 416h16v16h-16zM528 432h16v16h-16zM880 432h16v16h-16zM528 448h16v16h-16zM528 464h16v16h-16zM864 464h16v16h-16zM528 480h16v16h-16zM528 496h16v16h-16zM848 496h16v16h-16zM832 512h16v16h-16zM544 528h16v16h-16zM816 528h16v16h-16zM800 544h16v16h-16zM784 560h16v16h-16zM592 576h16v16h-16zM752 576h16v16h-16zM624 592h32v16h-32zM688 592h32v16h-32z"/>
<path fill="#a0a2a3" d="M704 272h80v16h-80zM656 288h16v16h-16zM816 288h16v16h-16zM624 304h16v16h-16zM832 304h16v16h-16zM848 320h16v16h-16zM864 336h16v16h-16zM560 368h16v16h-16zM880 384h16v16h-16zM544 400h16v16h-16zM880 400h16v16h-16zM864 448h16v16h-16zM848 480h16v16h-16zM560 544h16v16h-16zM576 560h16v16h-16zM768 560h16v16h-16zM736 576h16v16h-16zM656 592h32v16h-32z"/>
<path fill="#a1a3a4" d="M800 288h16v16h-16zM816 304h16v16h-16zM608 320h16v16h-16zM592 336h16v16h-16zM848 336h16v16h-16zM576 352h16v16h-16zM864 352h16v16h-16zM864 368h16v16h-16zM864 384h16v16h-16zM864 400h16v16h-16zM544 416h16v16h-16zM864 416h16v16h-16zM864 432h16v16h-16zM848 464h16v16h-16zM832 496h16v16h-16zM544 512h16v16h-16zM816 512h16v16h-16zM800 528h16v16h-16zM784 544h16v16h-16zM752 560h16v16h-16zM608 576h32v16h-32zM704 576h32v16h-32z"/>
<path fill="#a2a4a5" d="M672 288h16v16h-16zM768 288h32v16h-32zM640 304h16v16h-16zM832 320h16v16h-16zM848 352h16v16h-16zM560 384h16v16h-16zM544 432h16v16h-16zM848 448h16v16h-16zM544 480h16v16h-16zM832 480h16v16h-16zM544 496h16v16h-16zM560 528h16v16h-16zM576 544h16v16h-16zM768 544h16v16h-16zM592 560h16v16h-16zM736 560h16v16h-16zM640 576h64v16h-64z"/>
<path fill="#a3a5a6" d="M688 288h80v16h-80zM800 304h16v16h-16zM624 320h16v16h-16zM816 320h16v16h-16zM832 336h16v16h-16zM576 368h16v16h-16zM848 368h16v16h-16zM848 384h16v16h-16zM560 400h16v16h-16zM848 400h16v16h-16zM848 416h16v16h-16zM848 432h16v16h-16zM544 448h16v16h-16zM544 464h16v16h-16zM832 464h16v16h-16zM816 496h16v16h-16zM560 512h16v16h-16zM800 512h16v16h-16zM784 528h16v16h-16zM592 544h16v16h-16zM608 560h16v16h-16zM720 560h16v16h-16z"/>
<path fill="#a4a6a7" d="M656 304h16v16h-16zM784 304h16v16h-16zM608 336h16v16h-16zM592 352h16v16h-16zM832 352h16v16h-16zM560 416h16v16h-16zM832 448h16v16h-16zM816 480h16v16h-16zM560 496h16v16h-16zM576 528h16v16h-16zM752 544h16v16h-16zM624 560h48v16h-48zM688 560h32v16h-32z"/>
<path fill="#a5a7a8" d="M672 304h16v16h-16zM752 304h32v16h-32zM640 320h16v16h-16zM800 320h16v16h-16zM816 336h16v16h-16zM832 368h16v16h-16zM576 384h16v16h-16zM832 384h16v16h-16zM832 416h16v16h-16zM560 432h16v16h-16zM832 432h16v16h-16zM560 448h16v16h-16zM560 464h16v16h-16zM560 480h16v16h-16zM800 496h16v16h-16zM576 512h16v16h-16zM784 512h16v16h-16zM592 528h16v16h-16zM768 528h16v16h-16zM608 544h16v16h-16zM736 544h16v16h-16zM672 560h16v16h-16z"/>
<path fill="#a6a8a9" d="M688 304h64v16h-64zM784 320h16v16h-16zM624 336h16v16h-16zM800 336h16v16h-16zM608 352h16v16h-16zM816 352h16v16h-16zM592 368h16v16h-16zM576 400h16v16h-16zM832 400h16v16h-16zM816 464h16v16h-16zM576 496h16v16h-16zM752 528h16v16h-16zM624 544h32v16h-32zM720 544h16v16h-16z"/>
<path fill="#a7a9aa" d="M656 320h16v16h-16zM768 320h16v16h-16zM816 368h16v16h-16zM816 384h16v16h-16zM576 416h16v16h-16zM816 432h16v16h-16zM816 448h16v16h-16zM576 480h16v16h-16zM800 480h16v16h-16zM784 496h16v16h-16zM592 512h16v16h-16zM768 512h16v16h-16zM608 528h16v16h-16zM736 528h16v16h-16zM656 544h64v16h-64z"/>
<path fill="#a8aaab" d="M672 320h16v16h-16zM752 320h16v16h-16zM640 336h16v16h-16zM784 336h16v16h-16zM624 352h16v16h-16zM800 352h16v16h-16zM608 368h16v16h-16zM592 384h16v16h-16zM816 400h16v16h-16zM816 416h16v16h-16zM576 432h16v16h-16zM576 448h16v16h-16zM576 464h16v16h-16zM800 464h16v16h-16zM592 496h16v16h-16zM608 512h16v16h-16zM624 528h16v16h-16zM720 528h16v16h-16z"/>
<path fill="#a9abac" d="M688 320h64v16h-64zM656 336h16v16h-16zM768 336h16v16h-16zM784 352h16v16h-16zM800 368h16v16h-16zM592 400h16v16h-16zM800 448h16v16h-16zM592 480h16v16h-16zM784 480h16v16h-16zM768 496h16v16h-16zM752 512h16v16h-16zM640 528h32v16h-32zM704 528h16v16h-16z"/>
<path fill="#aaacad" d="M752 336h16v16h-16zM608 384h16v16h-16zM800 384h16v16h-16zM800 400h16v16h-16zM592 416h16v16h-16zM800 416h16v16h-16zM592 432h16v16h-16zM800 432h16v16h-16zM592 448h16v16h-16zM592 464h16v16h-16zM608 496h16v16h-16zM624 512h16v16h-16zM736 512h16v16h-16zM672 528h32v16h-32z"/>
<path fill="#abadae" d="M672 336h16v16h-16zM736 336h16v16h-16zM640 352h16v16h-16zM768 352h16v16h-16zM624 368h16v16h-16zM784 368h16v16h-16zM608 400h16v16h-16zM784 464h16v16h-16zM608 480h16v16h-16zM768 480h16v16h-16zM624 496h16v16h-16zM752 496h16v16h-16zM640 512h16v16h-16zM720 512h16v16h-16z"/>
<path fill="#acaeaf" d="M688 336h48v16h-48zM656 352h16v16h-16zM784 384h16v16h-16zM608 416h16v16h-16zM784 448h16v16h-16zM608 464h16v16h-16zM656 512h64v16h-64z"/>
<path fill="#adafb0" d="M752 352h16v16h-16zM640 368h16v16h-16zM768 368h16v16h-16zM624 384h16v16h-16zM784 400h16v16h-16zM784 416h16v16h-16zM608 432h16v16h-16zM784 432h16v16h-16zM608 448h16v16h-16zM768 464h16v16h-16zM624 480h16v16h-16zM752 480h16v16h-16zM640 496h16v16h-16zM736 496h16v16h-16z"/>
<path fill="#aeb0b1" d="M672 352h16v16h-16zM736 352h16v16h-16zM624 400h16v16h-16zM624 464h16v16h-16zM656 496h16v16h-16zM720 496h16v16h-16z"/>
<path fill="#afb1b2" d="M688 352h48v16h-48zM656 368h16v16h-16zM752 368h16v16h-16zM640 384h16v16h-16zM768 384h16v16h-16zM624 416h16v16h-16zM624 448h16v16h-16zM768 448h16v16h-16zM640 480h16v16h-16zM736 480h16v16h-16zM672 496h48v16h-48z"/>
<path fill="#b0b2b3" d="M768 400h16v16h-16zM768 416h16v16h-16zM624 432h16v16h-16zM768 432h16v16h-16zM752 464h16v16h-16zM656 480h16v16h-16z"/>
<path fill="#b1b3b4" d="M672 368h16v16h-16zM736 368h16v16h-16zM752 384h16v16h-16zM640 400h16v16h-16zM752 448h16v16h-16zM640 464h16v16h-16zM720 480h16v16h-16z"/>
<path fill="#b2b4b5" d="M688 368h48v16h-48zM656 384h16v16h-16zM752 400h16v16h-16zM640 416h16v16h-16zM640 432h16v16h-16zM640 448h16v16h-16zM736 464h16v16h-16zM672 480h48v16h-48z"/>
<path fill="#b3b5b6" d="M672 384h16v16h-16zM736 384h16v16h-16zM656 400h16v16h-16zM752 416h16v16h-16zM752 432h16v16h-16zM656 464h16v16h-16z"/>
<path fill="#b4b6b7" d="M656 448h16v16h-16zM736 448h16v16h-16zM672 464h16v16h-16zM720 464h16v16h-16z"/>
<path fill="#b5b7b8" d="M688 384h48v16h-48zM672 400h16v16h-16zM736 400h16v16h-16zM656 416h16v16h-16zM736 416h16v16h-16zM656 432h16v16h-16zM736 432h16v16h-16zM688 464h32v16h-32z"/>
<path fill="#b6b8b9" d="M720 400h16v16h-16zM672 448h16v16h-16zM720 448h16v16h-16z"/>
<path fill="#b7b9ba" d="M688 400h32v16h-32zM672 416h16v16h-16zM720 416h16v16h-16zM672 432h16v16h-16zM720 432h16v16h-16zM688 448h32v16h-32z"/>
<path fill="#b8babb" d="M688 416h32v16h-32zM688 432h32v16h-32z"/>
</g></g>
<ellipse cx="793.7" cy="515.4" rx="330.0" ry="330.1" fill="url(#gSphR)"/>
<ellipse cx="793.7" cy="515.4" rx="330.0" ry="330.1" fill="none" stroke="#262626" stroke-opacity="0.6" stroke-width="1.1"/>
<g clip-path="url(#cSph)"><g clip-path="url(#cFront)" opacity="0.45"><use href="#pgA"/><use href="#pgB"/><use href="#pax"/><use href="#pay"/></g></g>
</g></svg>
<svg width="1928" height="1048" viewBox="0 0 1928 1048" font-family='"DejaVu Sans","Liberation Sans","WenQuanYi Zen Hei","Noto Sans CJK SC",sans-serif' font-size="11"><g transform="translate(2.5 12.8) scale(0.93)"><path d="M8.3 0.6L14.2 5.2C15.6 6.3 16 7.6 15.9 8.8C15.7 11.6 13.2 13.6 10 13.6C6.8 13.6 4.2 11.5 4.1 8.9L0.9 11.3C0.3 11.7-0.5 10.9 0.2 10.3L5.6 6.1H1.9C1 6.1 1 4.8 1.9 4.8H7.2L8.6 3.7L7.3 2.6C6.6 2 7.5 0.9 8.3 0.6Z" fill="#ea7600"/><ellipse cx="10" cy="8.4" rx="3.5" ry="3.2" fill="#fff"/><circle cx="10" cy="8.4" r="1.7" fill="#265787"/></g>
<text x="23.5" y="24" fill="#9a9a9a" font-size="12" font-family="Liberation Sans,sans-serif">Blender</text>
<path d="M1798.5 18.5H1809" stroke="#9a9a9a" stroke-width="1"/>
<rect x="1844.5" y="15.5" width="8" height="8" rx="1.5" fill="none" stroke="#9a9a9a"/><path d="M1846.5 15.5V14.5Q1846.5 13.5 1847.5 13.5H1853Q1854.5 13.5 1854.5 15V20.5Q1854.5 21.5 1853.5 21.5H1852.5" fill="none" stroke="#9a9a9a"/>
<path d="M1890 13L1900.5 23.5M1900.5 13L1890 23.5" stroke="#9a9a9a" stroke-width="1"/>
<g transform="translate(10 37.2) scale(1)"><path d="M8.3 0.6L14.2 5.2C15.6 6.3 16 7.6 15.9 8.8C15.7 11.6 13.2 13.6 10 13.6C6.8 13.6 4.2 11.5 4.1 8.9L0.9 11.3C0.3 11.7-0.5 10.9 0.2 10.3L5.6 6.1H1.9C1 6.1 1 4.8 1.9 4.8H7.2L8.6 3.7L7.3 2.6C6.6 2 7.5 0.9 8.3 0.6Z" fill="#e6e6e6"/><ellipse cx="10" cy="8.4" rx="3.5" ry="3.2" fill="#1b1b1b"/><circle cx="10" cy="8.4" r="1.7" fill="#e6e6e6"/></g>
<text x="35.5" y="48.4" fill="#e6e6e6">文件</text>
<text x="72" y="48.4" fill="#e6e6e6">编辑</text>
<text x="108.7" y="48.4" fill="#e6e6e6">渲染</text>
<text x="145.5" y="48.4" fill="#e6e6e6">窗口</text>
<text x="182.5" y="48.4" fill="#e6e6e6">帮助</text>
<path d="M230 56V41Q230 37 234 37H278Q282 37 282 41V56Z" fill="#2c2c2c"/>
<text transform="translate(239.2 50.6) scale(0.9 1)" fill="#ffffff">Layout</text>
<text transform="translate(293.4 50.6) scale(0.9 1)" fill="#989898">Modeling</text>
<text transform="translate(358.3 50.6) scale(0.9 1)" fill="#989898">Sculpting</text>
<text transform="translate(424.4 50.6) scale(0.9 1)" fill="#989898">UV Editing</text>
<text transform="translate(496.5 50.6) scale(0.9 1)" fill="#989898">Texture Paint</text>
<text transform="translate(582 50.6) scale(0.9 1)" fill="#989898">Shading</text>
<text transform="translate(641 50.6) scale(0.9 1)" fill="#989898">Animation</text>
<text transform="translate(712 50.6) scale(0.9 1)" fill="#989898">Rendering</text>
<text transform="translate(782 50.6) scale(0.9 1)" fill="#989898">Compositing</text>
<text transform="translate(864 50.6) scale(0.9 1)" fill="#989898">Geometry Nodes</text>
<text transform="translate(968 50.6) scale(0.9 1)" fill="#989898">Scripting</text>
<path d="M1028 46.5H1037M1032.5 42V51" stroke="#989898" stroke-width="1.1"/>
<rect x="1523.5" y="34" width="191" height="20" rx="4" fill="#282828" stroke="#3a3a3a" stroke-width="1"/><path d="M1555 34.5V53.5"  stroke="#3a3a3a"/><rect x="1555.5" y="34.5" width="119" height="19" fill="#1d1d1d"/><rect x="1674.5" y="34.5" width="20" height="19" fill="#545454"/><path d="M1695 34.500H1710.5Q1714 34.5 1714 38V50Q1714 53.5 1710.5 53.5H1695Z" fill="#3c3c3c"/><g fill="#e6e6e6"><path d="M1532.200 36.800L1527.700 47.300Q1529.500 49.800 1533.300 49.200Q1533 45.500 1535.800 43.800Z"/><circle cx="1540" cy="38.800" r="2"/><circle cx="1537.900" cy="46.900" r="3.500" fill="#282828" stroke="#e6e6e6" stroke-width="1.200"/><path d="M1536 46.200Q1536.500 45 1537.700 44.800" fill="none" stroke="#e6e6e6" stroke-width="0.9"/></g><path d="M1545 44L1548 47L1551 44" fill="none" stroke="#e6e6e6" stroke-width="1.3" stroke-linecap="round" stroke-linejoin="round"/><text transform="translate(1562.8 48) scale(0.9 1)" fill="#e6e6e6">Scene</text><path d="M1680.5 40.5H1678.1V51.5H1687.5V49" fill="none" stroke="#e6e6e6" stroke-width="1.2"/><path d="M1681.1 37.500H1687L1690 40.5V49H1681.1Z" fill="none" stroke="#e6e6e6" stroke-width="1.2"/><path d="M1700.5 41L1708.5 49M1708.5 41L1700.5 49" stroke="#8a8a8a" stroke-width="1.1"/><g transform="translate(1662.5 44.500) rotate(45)" fill="none" stroke="#9a9a9a" stroke-width="1.1"><path d="M-2.500 -7H2.500M-1.800 -7V-2.500L-3.500 0.500H3.500L1.800 -2.500V-7M0 0.500V7"/></g>
<rect x="1720.5" y="34" width="191" height="20" rx="4" fill="#282828" stroke="#3a3a3a" stroke-width="1"/><path d="M1752 34.5V53.5"  stroke="#3a3a3a"/><rect x="1752.5" y="34.5" width="119" height="19" fill="#1d1d1d"/><rect x="1871.5" y="34.5" width="20" height="19" fill="#545454"/><path d="M1892 34.500H1907.5Q1911 34.5 1911 38V50Q1911 53.5 1907.5 53.5H1892Z" fill="#3c3c3c"/><g transform="translate(1724.500 35.800)"><rect x="5" y="1.500" width="10" height="10" rx="1" fill="none" stroke="#e6e6e6" stroke-width="1.200"/><path d="M6 10.500L9 5L11 8.500L12.300 7L14 10.500Z" fill="#e6e6e6"/><circle cx="12.500" cy="4" r="1" fill="#e6e6e6"/><path d="M3 4V13.500H12.500M1 6.500V15.500H10.500" fill="none" stroke="#e6e6e6" stroke-width="1.100"/></g><path d="M1742 44L1745 47L1748 44" fill="none" stroke="#e6e6e6" stroke-width="1.3" stroke-linecap="round" stroke-linejoin="round"/><text transform="translate(1759.8 48) scale(0.9 1)" fill="#e6e6e6">ViewLayer</text><path d="M1877.5 40.5H1875.1V51.5H1884.5V49" fill="none" stroke="#e6e6e6" stroke-width="1.2"/><path d="M1878.1 37.500H1884L1887 40.5V49H1878.1Z" fill="none" stroke="#e6e6e6" stroke-width="1.2"/><path d="M1897.5 41L1905.5 49M1905.5 41L1897.5 49" stroke="#8a8a8a" stroke-width="1.1"/></svg>
<svg width="1928" height="1048" viewBox="0 0 1928 1048" font-family='"DejaVu Sans","Liberation Sans","WenQuanYi Zen Hei","Noto Sans CJK SC",sans-serif' font-size="11"><path d="M2 110V63Q2 58 7 58H1580Q1585 58 1585 63V110Z" fill="#323232" fill-opacity="0.82"/>
<rect x="9.5" y="60.5" width="31" height="19" rx="4.5" fill="#282828" stroke="#3d3d3d" stroke-width="1"/>
<g transform="translate(13 62)" fill="none" stroke="#e6e6e6" stroke-width="1.1"><path d="M0.500 8H13M1 12H12.500M3.500 6L2.500 14.500M10 6L11 14.500"/><circle cx="10.500" cy="3.800" r="3" fill="#e6e6e6" stroke="none"/><circle cx="9.700" cy="3" r="1" fill="#fff" stroke="none"/></g>
<path d="M31.5 69L34.5 72L37.5 69" fill="none" stroke="#e6e6e6" stroke-width="1.3" stroke-linecap="round" stroke-linejoin="round"/>
<rect x="46.5" y="60.5" width="109" height="19" rx="4.5" fill="#282828" stroke="#3d3d3d" stroke-width="1"/>
<g transform="translate(51 62)"><rect x="3.500" y="3.500" width="8" height="8" fill="#e6e6e6"/><path d="M0.500 4V0.500H4M11 0.500H14.500V4M14.500 11V14.500H11M4 14.500H0.500V11" fill="none" stroke="#e6e6e6" stroke-width="1.100"/></g>
<text x="72.2" y="74" fill="#e6e6e6">物体模式</text>
<path d="M146.4 69L149.4 72L152.4 69" fill="none" stroke="#e6e6e6" stroke-width="1.3" stroke-linecap="round" stroke-linejoin="round"/>
<text x="168.5" y="74" fill="#e6e6e6">视图</text>
<text x="205.2" y="74" fill="#e6e6e6">选择</text>
<text x="242" y="74" fill="#e6e6e6">添加</text>
<text x="279.3" y="74" fill="#e6e6e6">物体</text>
<rect x="45" y="88" width="94" height="18" rx="3.5" fill="#545454"/>
<path d="M63.8 88V106H48.5Q45 106 45 102.5V91.5Q45 88 48.5 88Z" fill="#4772b3"/>
<path d="M63.8 88V106" stroke="#3d3d3d" stroke-width="1"/>
<path d="M82.6 88V106" stroke="#3d3d3d" stroke-width="1"/>
<path d="M101.4 88V106" stroke="#3d3d3d" stroke-width="1"/>
<path d="M120.2 88V106" stroke="#3d3d3d" stroke-width="1"/>
<rect x="48" y="91" width="12.5" height="12.5" fill="none" stroke="#e6e6e6" stroke-width="1.1" stroke-dasharray="2.2 1.6"/>
<path d="M69.8 91H79.3V99H74.8V103.5H66.3V95.5H69.8Z" fill="#d0d0d0"/>
<rect x="85.6" y="95" width="8" height="8" fill="none" stroke="#d0d0d0" stroke-width="1.1" stroke-dasharray="2.2 1.6"/>
<path d="M89.6 91H98.1V99.5H94.6V94.5H89.6Z" fill="#d0d0d0"/>
<path d="M107.9 91H116.9V99.5H112.9V103.5H104.4V95H107.9ZM108.4 95H112.9V99.5H108.4Z" fill="#d0d0d0" fill-rule="evenodd"/>
<rect x="123.2" y="91" width="12.5" height="12.5" fill="none" stroke="#d0d0d0" stroke-width="1.1" stroke-dasharray="2.2 1.6"/>
<rect x="126.7" y="94.5" width="5.5" height="5.5" fill="#d0d0d0"/>
<rect x="667.5" y="60.5" width="79" height="19" rx="4.5" fill="#282828" stroke="#3d3d3d" stroke-width="1"/>
<g transform="translate(671 62)" fill="none" stroke="#e6e6e6" stroke-width="1.1"><path d="M2.500 13V1M0.500 3.500L2.500 1L4.500 3.500M3.500 13.500H13.500M11.500 11.500L13.500 13.500L11.500 15.500M3.500 12L10.500 5M7.500 4.500H11V8"/><circle cx="2.500" cy="13.500" r="1.600" fill="#282828"/></g>
<text x="693.5" y="74" fill="#e6e6e6">全局</text>
<path d="M737.4 69L740.4 72L743.4 69" fill="none" stroke="#e6e6e6" stroke-width="1.3" stroke-linecap="round" stroke-linejoin="round"/>
<rect x="752.5" y="60.5" width="31" height="19" rx="4.5" fill="#282828" stroke="#3d3d3d" stroke-width="1"/>
<g transform="translate(756 62)" fill="none" stroke="#e6e6e6" stroke-width="1.2"><circle cx="5" cy="10" r="3.700"/><circle cx="10" cy="5.500" r="3.700"/><circle cx="7.500" cy="7.800" r="1.200" fill="#e6e6e6" stroke="none"/></g>
<path d="M774.3 69L777.3 72L780.3 69" fill="none" stroke="#e6e6e6" stroke-width="1.3" stroke-linecap="round" stroke-linejoin="round"/>
<rect x="789.5" y="60.5" width="51" height="19" rx="4.5" fill="#282828" stroke="#3d3d3d" stroke-width="1"/>
<path d="M808.500 61V79H794Q790 79 790 75V65Q790 61 794 61Z" fill="#545454"/>
<g transform="translate(791.500 62)" fill="none" stroke="#a8a8a8" stroke-width="1.1"><path d="M2.500 5.500L6.500 2Q11 -0.500 13.500 3.500Q15.500 8 11 11L7 13.500L5 11L9.500 8Q11.500 6 10 4.500Q8.500 3.500 7 5L4.500 7.500Z"/></g>
<g transform="translate(811 62)" stroke="#e6e6e6" stroke-width="1.1" fill="none"><path d="M1.500 10.500H13.500M1.500 7.500V13.500M5.500 8.500V12.500M9.500 8.500V12.500M13.500 7.500V13.500"/><rect x="11" y="1.500" width="3.500" height="3.500" fill="#e6e6e6" stroke="none"/></g>
<path d="M831.4 69L834.4 72L837.4 69" fill="none" stroke="#e6e6e6" stroke-width="1.3" stroke-linecap="round" stroke-linejoin="round"/>
<rect x="846.5" y="60.5" width="52" height="19" rx="4.5" fill="#282828" stroke="#3d3d3d" stroke-width="1"/>
<path d="M865.500 61V79H851Q847 79 847 75V65Q847 61 851 61Z" fill="#545454"/>
<circle cx="856" cy="70" r="5.600" fill="none" stroke="#8c8c8c" stroke-width="1"/><circle cx="856" cy="70" r="2" fill="#c8c8c8"/>
<path d="M870 75.500C874 75.500 874.500 64.500 877 64.500C879.500 64.500 880 75.500 884 75.500" fill="none" stroke="#9a9a9a" stroke-width="1.1"/>
<path d="M888.5 69L891.5 72L894.5 69" fill="none" stroke="#5a5a5a" stroke-width="1.3" stroke-linecap="round" stroke-linejoin="round"/>
<rect x="1329.5" y="60.5" width="31" height="19" rx="4.5" fill="#282828" stroke="#3d3d3d" stroke-width="1"/>
<g><path d="M1335 66.400Q1340.500 60.600 1346.200 66.400Q1340.500 72.200 1335 66.400Z" fill="#e6e6e6"/><circle cx="1340.500" cy="66.300" r="2.500" fill="#282828"/><circle cx="1340.500" cy="66.300" r="1.300" fill="#e6e6e6"/><path d="M1331.700 69.100L1340.200 72.500L1336.800 73.800L1335.100 77.300Z" fill="#e6e6e6"/></g>
<path d="M1351.3 69.5L1354.3 72.5L1357.3 69.5" fill="none" stroke="#e6e6e6" stroke-width="1.3" stroke-linecap="round" stroke-linejoin="round"/>
<rect x="1366.5" y="60.5" width="39" height="19" rx="4.5" fill="#282828" stroke="#3d3d3d" stroke-width="1"/>
<path d="M1385 61V79H1371Q1367 79 1367 75V65Q1367 61 1371 61Z" fill="#4772b3"/>
<g fill="none" stroke="#fff" stroke-width="1.2"><path d="M1369.200 65.800Q1379.500 66.500 1380.800 77"/><path d="M1372 73.800L1382.500 63.800M1378.300 63.400H1383V68.100"/><circle cx="1370.900" cy="74.900" r="1.700"/></g>
<path d="M1392 69.5L1395 72.5L1398 69.5" fill="none" stroke="#e6e6e6" stroke-width="1.3" stroke-linecap="round" stroke-linejoin="round"/>
<rect x="1411.5" y="60.5" width="39" height="19" rx="4.5" fill="#282828" stroke="#3d3d3d" stroke-width="1"/>
<path d="M1430 61V79H1416Q1412 79 1412 75V65Q1412 61 1416 61Z" fill="#4772b3"/>
<g><circle cx="1422.400" cy="68.100" r="4.900" fill="#fff"/><path d="M1417.300 67.300A4.700 4.700 0 1 0 1423.500 75.200" fill="none" stroke="#fff" stroke-width="1.2"/><path d="M1418.800 70.500A5 5 0 0 0 1423.800 73.300" fill="none" stroke="#4772b3" stroke-width="1.3"/></g>
<path d="M1437 69.5L1440 72.5L1443 69.5" fill="none" stroke="#e6e6e6" stroke-width="1.3" stroke-linecap="round" stroke-linejoin="round"/>
<rect x="1456.5" y="60.5" width="19" height="19" rx="4" fill="#545454"/>
<g transform="translate(1458 62)" fill="none" stroke="#e0e0e0" stroke-width="1.1"><rect x="1.500" y="4.500" width="10" height="10"/><path d="M4.500 4.500V1.500H14.500V11.500H11.500"/><path d="M4 9H5.500M4.500 8.500V11.500M7.500 11.500H9"/></g>
<rect x="1481.5" y="60.5" width="96" height="19" rx="4" fill="#545454"/>
<rect x="1500.7" y="60.5" width="18.6" height="19" fill="#4772b3"/>
<path d="M1557.500 60.500H1573.500Q1577.500 60.500 1577.500 64.500V75.500Q1577.500 79.500 1573.500 79.500H1557.500Z" fill="#282828"/>
<rect x="1482" y="61" width="95" height="18" rx="3.5" fill="none" stroke="#3d3d3d" stroke-width="1"/>
<path d="M1500.5 61V79" stroke="#3d3d3d"/>
<path d="M1519.5 61V79" stroke="#3d3d3d"/>
<path d="M1538.5 61V79" stroke="#3d3d3d"/>
<path d="M1557.5 61V79" stroke="#3d3d3d"/>
<g fill="none" stroke="#c8c8c8" stroke-width="1"><circle cx="1491" cy="70" r="6.300"/><path d="M1491 63.700V76.300M1485 68H1497M1485.500 73H1496.500"/></g>
<circle cx="1510" cy="70" r="6.500" fill="#fff"/>
<g><circle cx="1529" cy="70" r="6.300" fill="none" stroke="#c8c8c8"/><path d="M1529 63.700A6.300 6.300 0 0 0 1524.500 74.500L1529 70Z" fill="#c8c8c8"/><path d="M1529 70L1533.500 74.500" stroke="#c8c8c8"/></g>
<g fill="none" stroke="#c8c8c8"><circle cx="1548" cy="70" r="6.300"/><path d="M1543.500 69A4.500 4.500 0 0 1 1547 65.500" /><path d="M1553 72L1550.500 75M1554 69.500L1552 72" stroke-width="0.8"/></g>
<path d="M1564.5 69.5L1567.5 72.5L1570.5 69.5" fill="none" stroke="#e6e6e6" stroke-width="1.3" stroke-linecap="round" stroke-linejoin="round"/>
<rect x="1532.5" y="87.5" width="47" height="19" rx="4.5" fill="#282828" stroke="#3d3d3d" stroke-width="1"/>
<text x="1540.5" y="101" fill="#e6e6e6">选项</text>
<path d="M1569.5 96L1572.5 99L1575.5 96" fill="none" stroke="#e6e6e6" stroke-width="1.3" stroke-linecap="round" stroke-linejoin="round"/></svg>
<svg width="1928" height="1048" viewBox="0 0 1928 1048" font-family='"DejaVu Sans","Liberation Sans","WenQuanYi Zen Hei","Noto Sans CJK SC",sans-serif' font-size="11"><rect x="9" y="118" width="40" height="68" rx="4.5" fill="#272727" opacity="0.97"/><path d="M9 152H49" stroke="#1c1c1c" stroke-width="1"/>
<path d="M9 151.500V122.500Q9 118 13.500 118H44.500Q49 118 49 122.500V151.500Z" fill="#4772b3"/>
<rect x="9" y="193" width="40" height="138" rx="4.5" fill="#272727" opacity="0.97"/><path d="M9 227.5H49" stroke="#1c1c1c" stroke-width="1"/><path d="M9 262H49" stroke="#1c1c1c" stroke-width="1"/><path d="M9 296.5H49" stroke="#1c1c1c" stroke-width="1"/>
<rect x="9" y="338" width="40" height="68" rx="4.5" fill="#272727" opacity="0.97"/><path d="M9 372H49" stroke="#1c1c1c" stroke-width="1"/>
<rect x="9" y="413" width="40" height="34" rx="4.5" fill="#272727" opacity="0.97"/>
<path d="M46.500 147V150.5H43Z" fill="#8a8a8a"/>
<path d="M46.500 291.5V295H43Z" fill="#8a8a8a"/>
<path d="M46.500 367V370.5H43Z" fill="#8a8a8a"/>
<path d="M46.500 442V445.5H43Z" fill="#8a8a8a"/>
<rect x="17.500" y="123.500" width="21" height="21" fill="none" stroke="#f5a623" stroke-width="1.3" stroke-dasharray="4 2"/>
<path d="M24.500 128.500L33 135.500L28 136L25 140Z" fill="#e6e6e6"/>
<circle cx="28" cy="169" r="11" fill="none" stroke="#e6e6e6" stroke-width="1.5"/><circle cx="28" cy="169" r="11" fill="none" stroke="#c03a3a" stroke-width="1.5" stroke-dasharray="4.3 4.34"/><path d="M28 162V167M28 171V176M21 169H26M30 169H35" stroke="#8e8e8e" stroke-width="1.4"/>
<g transform="translate(28 209.500)" fill="#e6e6e6" stroke="none"><path d="M0 -11.500L3.300 -7H-3.300ZM0 11.500L3.300 7H-3.300ZM-11.500 0L-7 -3.300V3.300ZM11.500 0L7 -3.300V3.300Z"/><path d="M-0.800 -6H0.800V-2.500H-0.800ZM-0.800 2.500H0.800V6H-0.800ZM-6 -0.800H-2.500V0.800H-6ZM2.500 -0.800H6V0.800H2.500Z"/></g>
<g transform="translate(28 244.500)"><path d="M-7.500 -4A8.500 8.500 0 0 1 7.500 -4M7.500 4A8.500 8.500 0 0 1 -7.500 4" fill="none" stroke="#e6e6e6" stroke-width="1.3"/><path d="M-12 -1H-6L-9 3.500ZM12 1H6L9 -3.500Z" fill="#e6e6e6"/><path d="M0 -3.500L3.500 0L0 3.500L-3.500 0Z" fill="#b4b4b4"/></g>
<g transform="translate(28 278.500)"><rect x="-9" y="-1" width="9.500" height="9.500" fill="#e6e6e6"/><path d="M-8 -3V-8.500H8.500V8H3" fill="none" stroke="#9a9a9a" stroke-width="1.2"/><path d="M1.500 -1.500L6.500 -6.500M3 -7H7V-3" fill="none" stroke="#e6e6e6" stroke-width="1.2"/></g>
<g transform="translate(28 313.500)"><circle r="9.500" fill="none" stroke="#e6e6e6" stroke-width="1.2" stroke-dasharray="9.900 5"  stroke-dashoffset="-2.500"/><rect x="-3.800" y="-3.800" width="7.600" height="7.600" fill="#e6e6e6"/><path d="M0 -11.500L2.500 -7.500H-2.500ZM0 11.500L2.500 7.500H-2.500ZM-11.500 0L-7.500 -2.500V2.500ZM11.500 0L7.500 -2.500V2.500Z" fill="#e6e6e6"/></g>
<g transform="translate(28 355)"><path d="M-10.500 5.500L-9.500 1.500L2.500 -11L6 -7.500L-6.500 4.500Z" fill="#e6e6e6"/><path d="M-12 6Q-7 11 -1 5Q5 -1 11.500 6" fill="none" stroke="#7fd1a6" stroke-width="1.3"/></g>
<g transform="translate(28 390)"><path d="M-9 -13H-5.500V9.500H10.500V12.500H-9Z" fill="#e6e6e6"/><path d="M-4 9V-4Q7 -3 8.500 9Z" fill="#7fd1a6"/><path d="M-4 -6.500Q10 -5.500 11 9" fill="none" stroke="#7fd1a6" stroke-width="1.1"/></g>
<g transform="translate(28 430)" fill="none" stroke="#7fd1a6" stroke-width="1.2"><path d="M-7 -5.500H5.500V9.500H-7ZM-7 -5.500L-2 -9.500H10.500L5.500 -5.500M10.500 -9.500V5L5.500 9.500"/><path d="M-11.500 -11.500H-5.500M-8.500 -14.500V-8.500" stroke="#7fd1a6" stroke-width="1.8"/></g>
<text x="67" y="129" fill="#ffffff">用户透视</text>
<text transform="translate(67 147) scale(0.9 1)" fill="#ffffff">(1) Collection | </text>
<text x="143.8" y="147" fill="#ffffff">棱角球</text>
<g stroke-linecap="round">
<circle cx="1514.500" cy="167" r="7.500" fill="#6d3a44" stroke="#e8334f" stroke-width="1.3"/>
<circle cx="1559.500" cy="165.500" r="7.500" fill="#4e6325" stroke="#7dc010" stroke-width="1.3"/>
<circle cx="1535" cy="189.500" r="7.300" fill="#354a6b" stroke="#2f83e3" stroke-width="1.3"/>
<path d="M1534.5 158.5L1516 153.500" stroke="#6d9c1e" stroke-width="2.2"/>
<path d="M1534.5 158.5L1551 153" stroke="#c83a52" stroke-width="2.2"/>
<path d="M1534.5 158.5L1534.500 136" stroke="#2f83e3" stroke-width="2.2"/>
<circle cx="1511" cy="152.500" r="7.700" fill="#6d9c1e"/><circle cx="1555.500" cy="151" r="7.700" fill="#c23b52"/><circle cx="1534.500" cy="129" r="8" fill="#2f83e3"/>
</g>
<text x="1534.500" y="133" text-anchor="middle" font-size="10.500" fill="#0c1a2e">Z</text><text x="1511" y="156.500" text-anchor="middle" font-size="10.500" fill="#1a2608">Y</text><text x="1555.500" y="155" text-anchor="middle" font-size="10.500" fill="#300b13">X</text>
<circle cx="1563" cy="213.5" r="13.500" fill="#2c2c2c" fill-opacity="0.85"/>
<circle cx="1563" cy="243.7" r="13.500" fill="#2c2c2c" fill-opacity="0.85"/>
<circle cx="1563" cy="274" r="13.500" fill="#2c2c2c" fill-opacity="0.85"/>
<circle cx="1563" cy="304.2" r="13.500" fill="#2c2c2c" fill-opacity="0.85"/>
<g><circle cx="1564.400" cy="212.500" r="6.700" fill="#e6e6e6"/><path d="M1559.500 217.500L1555.200 221.500" stroke="#e6e6e6" stroke-width="2.4" stroke-linecap="round"/><path d="M1561.200 212.500H1567.600M1564.400 209.300V215.700" stroke="#2c2c2c" stroke-width="1.3"/></g>
<g fill="#e6e6e6"><path d="M1559.500 252Q1557.500 249 1555 245.800Q1554.500 244.300 1556 244Q1557.500 244 1559.600 246.500L1558.300 238.800Q1558.200 237.300 1559.300 237.200Q1560.500 237.200 1560.800 238.600L1562 244L1562.300 237Q1562.400 235.800 1563.500 235.800Q1564.600 235.800 1564.700 237L1564.800 244L1566.300 237.800Q1566.600 236.600 1567.700 236.800Q1568.700 237.100 1568.500 238.300L1567.500 244.500L1569.700 240.800Q1570.400 239.800 1571.200 240.300Q1572 240.800 1571.500 242L1568.500 249.500Q1567.500 252 1565.500 252Z"/></g>
<g fill="#e6e6e6"><circle cx="1565.400" cy="270.300" r="4.300"/><circle cx="1558.300" cy="271.300" r="3.300"/><rect x="1559.700" y="275.500" width="8.200" height="6.500" rx="0.800"/><rect x="1557" y="277" width="2.500" height="3"/><path d="M1568.500 279L1571.800 276V282Z"/><circle cx="1565.400" cy="270.300" r="1.200" fill="#2c2c2c"/><circle cx="1558.300" cy="271.300" r="1" fill="#2c2c2c"/></g>
<g fill="none" stroke="#e6e6e6" stroke-width="1.25"><path d="M1558.700 298.700H1568L1571.800 310.600H1555.200ZM1561.800 298.700L1560.700 310.600M1565 298.700L1566.300 310.600M1557.500 302.400H1569.200M1556.400 306.300H1570.400"/></g>
<path d="M1585 123H1580Q1577 123 1577 126V134Q1577 137 1580 137H1585Z" fill="#2c2c2c" fill-opacity="0.8"/><path d="M1583.500 126.500L1580 130L1583.500 133.500" fill="none" stroke="#b0b0b0" stroke-width="1.1"/>
<g transform="translate(793.3 514)"><path d="M-0.700 -19V-5.500M0.700 5.500V19.500" stroke="#262626" stroke-width="1.1"/><path d="M-15.500 -3.700L-4.300 -0.300M3.400 1.100L15.500 4.600M-13.200 5.400L-4.300 1.700M3.400 -1.400L12.300 -4.800" stroke="#1e1e1e" stroke-width="1.1"/><circle r="10.200" fill="none" stroke="#f4f4f4" stroke-width="1.3"/><circle r="10.200" fill="none" stroke="#f03838" stroke-width="1.3" stroke-dasharray="4 4.010"/><circle r="2.600" fill="#f7a020" stroke="#2a3340" stroke-width="0.7"/></g></svg>
<svg width="1928" height="1048" viewBox="0 0 1928 1048" font-family='"DejaVu Sans","Liberation Sans","WenQuanYi Zen Hei","Noto Sans CJK SC",sans-serif' font-size="11"><clipPath id="cOut"><rect x="1588" y="58" width="331" height="306.5" rx="5"/></clipPath>
<g clip-path="url(#cOut)">
<rect x="1588" y="58" width="331" height="306.5" fill="#282828"/>
<rect x="1588" y="103.5" width="331" height="20" fill="#2b2b2b"/>
<rect x="1588" y="143.5" width="331" height="20" fill="#2b2b2b"/>
<rect x="1588" y="183.5" width="331" height="20" fill="#2b2b2b"/>
<rect x="1588" y="223.5" width="331" height="20" fill="#2b2b2b"/>
<rect x="1588" y="263.5" width="331" height="20" fill="#2b2b2b"/>
<rect x="1588" y="303.5" width="331" height="20" fill="#2b2b2b"/>
<rect x="1588" y="343.5" width="331" height="20" fill="#2b2b2b"/>
<rect x="1588" y="58" width="331" height="25.5" fill="#2a2a2a"/>
</g>
<rect x="1596" y="60" width="32" height="20" rx="4.5" fill="#282828" stroke="#3d3d3d" stroke-width="1"/>
<g transform="translate(1600 62)" fill="#e6e6e6"><rect x="0.500" y="0.500" width="5" height="3"/><rect x="7.500" y="6.500" width="7.500" height="3"/><rect x="7.500" y="11.500" width="7.500" height="3"/><path d="M3 4V13H6.500M3 8H6.500" fill="none" stroke="#e6e6e6" stroke-width="1"/></g>
<path d="M1618.5 69.5L1621.5 72.5L1624.5 69.5" fill="none" stroke="#e6e6e6" stroke-width="1.3" stroke-linecap="round" stroke-linejoin="round"/>
<rect x="1633" y="60" width="32" height="20" rx="4.5" fill="#282828" stroke="#3d3d3d" stroke-width="1"/>
<g transform="translate(1637.200 61.300)"><rect x="5" y="1.500" width="10" height="10" rx="1" fill="none" stroke="#e6e6e6" stroke-width="1.200"/><path d="M6 10.500L9 5L11 8.500L12.300 7L14 10.500Z" fill="#e6e6e6"/><circle cx="12.500" cy="4" r="1" fill="#e6e6e6"/><path d="M3 4V13.500H12.500M1 6.500V15.500H10.500" fill="none" stroke="#e6e6e6" stroke-width="1.100"/></g>
<path d="M1655.5 69.5L1658.5 72.5L1661.5 69.5" fill="none" stroke="#e6e6e6" stroke-width="1.3" stroke-linecap="round" stroke-linejoin="round"/>
<rect x="1687.5" y="60.5" width="110" height="19" rx="4" fill="#1d1d1d" stroke="#3a3a3a" stroke-width="1"/>
<g fill="none" stroke="#e6e6e6" stroke-width="1.2"><circle cx="1699.500" cy="67.500" r="4.300"/><path d="M1696.500 70.500L1691.500 76.500"/></g>
<rect x="1855" y="60" width="32" height="20" rx="4.5" fill="#282828" stroke="#3d3d3d" stroke-width="1"/>
<path d="M1858.500 64H1872.500L1867 70.500V77.500L1864.500 75V70.500Z" fill="none" stroke="#e6e6e6" stroke-width="1.2" stroke-linejoin="round"/>
<path d="M1877.5 69.5L1880.5 72.5L1883.5 69.5" fill="none" stroke="#e6e6e6" stroke-width="1.3" stroke-linecap="round" stroke-linejoin="round"/>
<rect x="1892.5" y="60.5" width="19" height="19" rx="4" fill="#545454"/>
<g transform="translate(1894 62)"><path d="M1.500 4.500H10M2.500 6.500V14.500H12.500V8.500M6 9.500H9" fill="none" stroke="#d6d6d6" stroke-width="1.3"/><circle cx="12.500" cy="3.500" r="3.300" fill="#fff"/><path d="M10.500 3.500H14.500M12.500 1.500V5.500" stroke="#545454" stroke-width="1"/></g>
<g transform="translate(1611 88)"><rect x="0" y="0" width="14" height="3.500" fill="#e6e6e6"/><path d="M1 4.800H13V13H1Z" fill="#e6e6e6"/><rect x="5" y="6.500" width="4" height="1.600" fill="#2b2b2b"/></g>
<text x="1632.7" y="98.3" fill="#c4c4c4">场景集合</text>
<path d="M1615 112.500H1621.500L1618.200 118.500Z" fill="#c8c8c8"/>
<rect x="1628.5" y="105.5" width="19" height="17.5" rx="4" fill="#4f4f4f" stroke="#6e6e6e" stroke-width="1"/>
<g transform="translate(1631 107.8)"><rect x="0" y="0" width="14" height="3.500" fill="#e6e6e6"/><path d="M1 4.800H13V13H1Z" fill="#e6e6e6"/><rect x="5" y="6.500" width="4" height="1.600" fill="#2b2b2b"/></g>
<text transform="translate(1652.4 118.6) scale(0.9 1)" fill="#e6e6e6">Collection</text>
<path d="M1617.500 129V139" stroke="#6a6a6a"/>
<path d="M1635 131.500L1641 134.700L1635 138Z" fill="#c8c8c8"/>
<rect x="1648.5" y="125.5" width="19" height="17.5" rx="4" fill="#4f4f4f" stroke="#6e6e6e" stroke-width="1"/>
<path d="M1651.500 128H1664.500L1658 141.500ZM1655.800 130.700H1660.200L1658 135.500Z" fill="#e0873a" fill-rule="evenodd"/>
<text x="1672.3" y="138.5" fill="#e6e6e6">棱角球</text>
<g fill="none" stroke="#10c39d" stroke-width="1.1"><path d="M1731 130H1739.500M1730 131.500L1734 139M1740.500 131.500L1736.200 139"/><rect x="1728.500" y="128" width="2.500" height="2.500"/><rect x="1739.500" y="128" width="2.500" height="2.500"/><rect x="1733.800" y="138.500" width="2.500" height="2.500"/></g>
<rect x="1855" y="108.5" width="10.5" height="10.5" rx="1.5" fill="#e6e6e6"/>
<path d="M1857 114L1859.500 116.500L1863.500 110.800" fill="none" stroke="#1d1d1d" stroke-width="1.6"/>
<g transform="translate(1879.6 113.5)"><path d="M-6.500 0Q0 -7 6.500 0Q0 7 -6.500 0Z" fill="#e6e6e6"/><circle r="2.700" fill="#282828"/><circle r="1.300" fill="#e6e6e6"/></g>
<g transform="translate(1899.6 114)"><path d="M-6.500 -3.500H-3L-2 -5.500H2L3 -3.500H6.500V5H-6.500Z" fill="#e6e6e6"/><circle r="3" cy="0.700" fill="#282828"/><circle r="1.700" cy="0.700" fill="none" stroke="#e6e6e6" stroke-width="1"/></g>
<g transform="translate(1879.6 133.5)"><path d="M-6.500 0Q0 -7 6.500 0Q0 7 -6.500 0Z" fill="#e6e6e6"/><circle r="2.700" fill="#282828"/><circle r="1.300" fill="#e6e6e6"/></g>
<g transform="translate(1899.6 134)"><path d="M-6.500 -3.500H-3L-2 -5.500H2L3 -3.500H6.500V5H-6.500Z" fill="#e6e6e6"/><circle r="3" cy="0.700" fill="#282828"/><circle r="1.700" cy="0.700" fill="none" stroke="#e6e6e6" stroke-width="1"/></g>
<clipPath id="cProp"><rect x="1588" y="368" width="331" height="650.5" rx="5"/></clipPath>
<g clip-path="url(#cProp)">
<rect x="1588" y="368" width="331" height="650.5" fill="#303030"/>
<rect x="1588" y="368" width="331" height="25" fill="#323232"/>
<rect x="1588" y="393" width="27.8" height="625.5" fill="#1d1d1d"/>
<path d="M1588 399Q1588 395.500 1592 395.500H1616V429H1592Q1588 429 1588 425Z" fill="#303030"/>
</g>
<rect x="1596.5" y="371" width="31" height="19" rx="4.5" fill="#282828" stroke="#3d3d3d" stroke-width="1"/>
<g transform="translate(1600.500 373)" fill="#e6e6e6"><rect x="0" y="0.300" width="14.200" height="6" rx="3"/><rect x="0" y="8.300" width="14.200" height="6" rx="3"/><path d="M6.500 1.300H11.200Q13.200 1.300 13.200 3.300Q13.200 5.300 11.200 5.300H6.500Z" fill="#2a2a2a"/><path d="M9.500 9.300H11.200Q13.200 9.300 13.200 11.300Q13.200 13.300 11.200 13.300H9.500Z" fill="#2a2a2a"/></g>
<path d="M1618.5 379.5L1621.5 382.5L1624.5 379.5" fill="none" stroke="#e6e6e6" stroke-width="1.3" stroke-linecap="round" stroke-linejoin="round"/>
<rect x="1699.5" y="371.5" width="110" height="18" rx="4" fill="#1d1d1d"/>
<g fill="none" stroke="#e6e6e6" stroke-width="1.2"><circle cx="1712.500" cy="378" r="4.300"/><path d="M1709.500 381L1704 387"/></g>
<rect x="1892.5" y="371" width="19" height="19" rx="4.5" fill="#282828" stroke="#3d3d3d" stroke-width="1"/>
<path d="M1899 379.5L1902 382.5L1905 379.5" fill="none" stroke="#e6e6e6" stroke-width="1.3" stroke-linecap="round" stroke-linejoin="round"/>
<g transform="translate(1594.500 405)" fill="#e6e6e6"><path d="M10 1.500Q8 3 8.500 5.500L10.500 7.500V15H13.500V7.500L15.500 5.500Q16 3 14 1.500V5H10Z"/><rect x="3" y="1.500" width="1.600" height="6"/><path d="M1.500 9H6.200V13.500Q6.200 15.500 3.800 15.500Q1.500 15.500 1.500 13.500Z"/></g>
<g transform="translate(1595 443)" fill="none" stroke="#d0d0d0" stroke-width="1.3"><rect x="1.500" y="3.500" width="13" height="10" rx="1"/><path d="M4 3.500V1.500H9V3.500"/><path d="M10 6.500H14.500M10 9.500H14.500"/></g>
<g transform="translate(1626.500 403.500)"><rect x="3.500" y="3.500" width="8" height="8" fill="#e6e6e6"/><path d="M0.500 4V0.500H4M11 0.500H14.500V4M14.500 11V14.500H11M4 14.500H0.500V11" fill="none" stroke="#e6e6e6" stroke-width="1.100"/></g>
<text x="1650.4" y="415.3" fill="#e6e6e6">棱角球</text>
<g transform="translate(1902.500 411) rotate(45)" fill="none" stroke="#9a9a9a" stroke-width="1.1"><path d="M-2.500 -7H2.500M-1.800 -7V-2.500L-3.500 0.500H3.500L1.800 -2.500V-7M0 0.500V7"/></g>
<rect x="1625" y="438" width="286" height="19.5" rx="4" fill="#3f5f93"/>
<text x="1632.2" y="451.6" fill="#ffffff">添加修改器</text>
<path d="M1902 446.5L1905 449.5L1908 446.5" fill="none" stroke="#e6e6e6" stroke-width="1.3" stroke-linecap="round" stroke-linejoin="round"/></svg>
<svg width="1928" height="1048" viewBox="0 0 1928 1048" font-family='"DejaVu Sans","Liberation Sans","WenQuanYi Zen Hei","Noto Sans CJK SC",sans-serif' font-size="11"><clipPath id="cTl"><rect x="2" y="948" width="1583" height="71" rx="5"/></clipPath>
<g clip-path="url(#cTl)">
<rect x="2" y="948" width="1583" height="71" fill="#1d1d1d"/>
<rect x="2" y="948" width="1583" height="25" fill="#2f2f2f"/>
<rect x="2" y="996" width="1583" height="23" fill="#202020"/>
<rect x="53.5" y="996" width="1474" height="23" fill="#2c2c2c"/>
<path d="M-5.8 996V1019M23.6 996V1019M53.1 996V1019M82.6 996V1019M112.1 996V1019M141.5 996V1019M171.0 996V1019M200.5 996V1019M230.0 996V1019M259.4 996V1019M288.9 996V1019M318.4 996V1019M347.9 996V1019M377.3 996V1019M406.8 996V1019M436.3 996V1019M465.8 996V1019M495.2 996V1019M524.7 996V1019M554.2 996V1019M583.7 996V1019M613.1 996V1019M642.6 996V1019M672.1 996V1019M701.6 996V1019M731.0 996V1019M760.5 996V1019M790.0 996V1019M819.5 996V1019M848.9 996V1019M878.4 996V1019M907.9 996V1019M937.4 996V1019M966.8 996V1019M996.3 996V1019M1025.8 996V1019M1055.3 996V1019M1084.7 996V1019M1114.2 996V1019M1143.7 996V1019M1173.2 996V1019M1202.6 996V1019M1232.1 996V1019M1261.6 996V1019M1291.1 996V1019M1320.5 996V1019M1350.0 996V1019M1379.5 996V1019M1409.0 996V1019M1438.4 996V1019M1467.9 996V1019M1497.4 996V1019M1526.9 996V1019M1556.3 996V1019" stroke="#1c1c1c" stroke-width="1.2"/>
<rect x="9.5" y="1008.8" width="1566" height="7.8" rx="3.9" fill="#525252"/>
<circle cx="13.400" cy="1012.700" r="2.600" fill="#333"/><circle cx="1571.600" cy="1012.700" r="2.600" fill="#333"/>
<path d="M59 992V1019" stroke="#4772b3" stroke-width="2"/>
</g>
<text transform="translate(112.355 989.2) scale(0.9 1)" fill="#b4b4b4" text-anchor="middle">10</text>
<text transform="translate(171.305 989.2) scale(0.9 1)" fill="#b4b4b4" text-anchor="middle">20</text>
<text transform="translate(230.255 989.2) scale(0.9 1)" fill="#b4b4b4" text-anchor="middle">30</text>
<text transform="translate(289.205 989.2) scale(0.9 1)" fill="#b4b4b4" text-anchor="middle">40</text>
<text transform="translate(348.155 989.2) scale(0.9 1)" fill="#b4b4b4" text-anchor="middle">50</text>
<text transform="translate(407.105 989.2) scale(0.9 1)" fill="#b4b4b4" text-anchor="middle">60</text>
<text transform="translate(466.055 989.2) scale(0.9 1)" fill="#b4b4b4" text-anchor="middle">70</text>
<text transform="translate(525.005 989.2) scale(0.9 1)" fill="#b4b4b4" text-anchor="middle">80</text>
<text transform="translate(583.955 989.2) scale(0.9 1)" fill="#b4b4b4" text-anchor="middle">90</text>
<text transform="translate(642.905 989.2) scale(0.9 1)" fill="#b4b4b4" text-anchor="middle">100</text>
<text transform="translate(701.855 989.2) scale(0.9 1)" fill="#b4b4b4" text-anchor="middle">110</text>
<text transform="translate(760.805 989.2) scale(0.9 1)" fill="#b4b4b4" text-anchor="middle">120</text>
<text transform="translate(819.755 989.2) scale(0.9 1)" fill="#b4b4b4" text-anchor="middle">130</text>
<text transform="translate(878.705 989.2) scale(0.9 1)" fill="#b4b4b4" text-anchor="middle">140</text>
<text transform="translate(937.655 989.2) scale(0.9 1)" fill="#b4b4b4" text-anchor="middle">150</text>
<text transform="translate(996.605 989.2) scale(0.9 1)" fill="#b4b4b4" text-anchor="middle">160</text>
<text transform="translate(1055.55 989.2) scale(0.9 1)" fill="#b4b4b4" text-anchor="middle">170</text>
<text transform="translate(1114.5 989.2) scale(0.9 1)" fill="#b4b4b4" text-anchor="middle">180</text>
<text transform="translate(1173.45 989.2) scale(0.9 1)" fill="#b4b4b4" text-anchor="middle">190</text>
<text transform="translate(1232.4 989.2) scale(0.9 1)" fill="#b4b4b4" text-anchor="middle">200</text>
<text transform="translate(1291.35 989.2) scale(0.9 1)" fill="#b4b4b4" text-anchor="middle">210</text>
<text transform="translate(1350.3 989.2) scale(0.9 1)" fill="#b4b4b4" text-anchor="middle">220</text>
<text transform="translate(1409.25 989.2) scale(0.9 1)" fill="#b4b4b4" text-anchor="middle">230</text>
<text transform="translate(1468.2 989.2) scale(0.9 1)" fill="#b4b4b4" text-anchor="middle">240</text>
<text transform="translate(1527.15 989.2) scale(0.9 1)" fill="#b4b4b4" text-anchor="middle">250</text>
<rect x="46.5" y="976" width="24.3" height="17" rx="4" fill="#4772b3"/>
<text transform="translate(58.7 989.2) scale(0.9 1)" fill="#ffffff" text-anchor="middle">1</text>
<path d="M0 986H3Q7 986 7 990V998Q7 1002 3 1002H0Z" fill="#252525"/><path d="M1.500 990.500L5 994.500L1.500 998.500" fill="none" stroke="#9a9a9a" stroke-width="1"/>
<path d="M1582.500 983V1010" stroke="#444" stroke-width="2" stroke-linecap="round"/><path d="M1583 990.500L1580 994.500L1583 998.500" fill="none" stroke="#9a9a9a" stroke-width="1"/>
<rect x="8.5" y="951.5" width="31" height="19" rx="4.5" fill="#282828" stroke="#3d3d3d" stroke-width="1"/>
<g transform="translate(20 961)"><circle r="6.800" fill="#e6e6e6"/><path d="M1 -4L-2.500 0L1 4" fill="none" stroke="#282828" stroke-width="1.500"/></g>
<path d="M31 960.5L34 963.5L37 960.5" fill="none" stroke="#e6e6e6" stroke-width="1.3" stroke-linecap="round" stroke-linejoin="round"/>
<rect x="45.5" y="951.5" width="123" height="19" rx="4.5" fill="#282828" stroke="#3d3d3d" stroke-width="1"/>
<path d="M91.500 952V970" stroke="#3d3d3d"/>
<text x="53.5" y="965" fill="#e6e6e6">回放</text>
<path d="M82.3 960.5L85.3 963.5L88.3 960.5" fill="none" stroke="#e6e6e6" stroke-width="1.3" stroke-linecap="round" stroke-linejoin="round"/>
<text x="99.6" y="965" fill="#e6e6e6">抠像</text>
<text transform="translate(121 965) scale(0.9 1)" fill="#e6e6e6">(</text>
<text x="125" y="965" fill="#e6e6e6">插帧</text>
<text transform="translate(147 965) scale(0.9 1)" fill="#e6e6e6">)</text>
<path d="M159.5 960.5L162.5 963.5L165.5 960.5" fill="none" stroke="#e6e6e6" stroke-width="1.3" stroke-linecap="round" stroke-linejoin="round"/>
<text x="178.3" y="965" fill="#e6e6e6">视图</text>
<text x="215.1" y="965" fill="#e6e6e6">标记</text>
<rect x="700.5" y="951.5" width="39" height="19" rx="4.5" fill="#282828" stroke="#3d3d3d" stroke-width="1"/>
<path d="M719.500 952V970H705Q701 970 701 966V956Q701 952 705 952Z" fill="#545454"/>
<circle cx="710" cy="961" r="4.300" fill="#e6e6e6"/>
<path d="M726.3 960.5L729.3 963.5L732.3 960.5" fill="none" stroke="#5e5e5e" stroke-width="1.3" stroke-linecap="round" stroke-linejoin="round"/>
<rect x="746" y="951.5" width="118" height="19" rx="4" fill="#545454"/>
<path d="M764.4 952V970" stroke="#3d3d3d"/>
<path d="M784.8 952V970" stroke="#3d3d3d"/>
<path d="M804.7 952V970" stroke="#3d3d3d"/>
<path d="M824.7 952V970" stroke="#3d3d3d"/>
<path d="M844.8 952V970" stroke="#3d3d3d"/>
<path d="M750 955.500H752V966.500H750ZM753 961L759.500 955.500V966.500Z" fill="#e6e6e6"/>
<path d="M767 961L771.500 956L776 961L771.500 966ZM777 961L782 956.500V965.500Z" fill="#e6e6e6"/>
<path d="M789.500 961L800 955V967Z" fill="#e6e6e6"/>
<path d="M820.500 961L810 955V967Z" fill="#e6e6e6"/>
<path d="M833 961L828 956.500V965.500ZM843 961L838.500 956L834 961L838.500 966Z" fill="#e6e6e6"/>
<path d="M858.500 955.500H860.500V966.500H858.500ZM857.500 961L851 955.500V966.500Z" fill="#e6e6e6"/>
<rect x="1297" y="951.5" width="73.5" height="19" rx="4" fill="#545454"/>
<text transform="translate(1333.7 965) scale(0.9 1)" fill="#e6e6e6" text-anchor="middle">1</text>
<rect x="1377" y="951.5" width="201.5" height="19" rx="4" fill="#545454"/>
<path d="M1395.500 952V970M1482.500 952V970" stroke="#3d3d3d"/>
<g transform="translate(1386 961.500)" fill="none" stroke="#e6e6e6" stroke-width="1.1"><circle r="5.300"/><path d="M0 -3V0.300H3M-1.500 -7.300H1.500M4 -5.500L5.500 -7"/></g>
<text x="1410.6" y="965" fill="#e6e6e6">起始</text>
<text transform="translate(1468.6 965) scale(0.9 1)" fill="#e6e6e6" text-anchor="end">1</text>
<text x="1498.5" y="965" fill="#e6e6e6">结束点</text>
<text transform="translate(1565.3 965) scale(0.9 1)" fill="#e6e6e6" text-anchor="end">250</text>
<rect x="0" y="1021" width="1920" height="19" fill="#1d1d1d"/>
<rect x="0" y="1039.8" width="1920" height="1.2" fill="#3c3c3c"/>
<g transform="translate(12 1022.5)" fill="none" stroke="#b8b8b8" stroke-width="1.1"><rect x="0.500" y="0.500" width="10" height="14" rx="3.500"/><path d="M0.500 6.500V4Q0.500 0.500 4 0.500H5.500V6.500Z" fill="#8c8c8c" stroke="none"/></g>
<text x="34.6" y="1034" fill="#b4b4b4">设置活动修改器</text>
<g transform="translate(223 1022.5)" fill="none" stroke="#b8b8b8" stroke-width="1.1"><rect x="0.500" y="0.500" width="10" height="14" rx="3.500"/><rect x="4.300" y="2.500" width="2.400" height="4.500" rx="1" fill="#b8b8b8" stroke="none"/></g>
<text x="245.5" y="1034" fill="#b4b4b4">平移视图</text>
<g transform="translate(434 1022.5)" fill="none" stroke="#b8b8b8" stroke-width="1.1"><rect x="0.500" y="0.500" width="10" height="14" rx="3.500"/><path d="M10.500 6.500V4Q10.500 0.500 7 0.500H5.500V6.500Z" fill="#b8b8b8" stroke="none"/></g>
<text x="456.5" y="1034" fill="#b4b4b4">上下文菜单</text>
<text transform="translate(1911.5 1034) scale(0.9 1)" fill="#a8a8a8" text-anchor="end">3.3.7</text>
<circle cx="38" cy="1052" r="7" fill="#f0a0b0"/><circle cx="1082" cy="1051.500" r="4" fill="#a040c0"/></svg>
<svg width="1928" height="1048" viewBox="0 0 1928 1048" font-family='"DejaVu Sans","Liberation Sans","WenQuanYi Zen Hei","Noto Sans CJK SC",sans-serif' font-size="11"><defs><filter id="fSh" x="-5%" y="-5%" width="110%" height="112%"><feGaussianBlur stdDeviation="2.2"/></filter></defs>
<rect x="1432" y="457" width="477.5" height="458" rx="5" fill="#000" opacity="0.5" filter="url(#fSh)"/>
<path d="M1432 456H1909.5V910Q1909.5 914 1905.5 914H1436Q1432 914 1432 910Z" fill="#181818"/>
<path d="M1432 487.500H1909.5" stroke="#383838" stroke-width="1"/>
<text x="1440.5" y="474.3" fill="#8e8e8e">修改</text>
<g transform="translate(1442 495)"><path d="M6.500 1.500H14.500V10H12" fill="none" stroke="#8c8c8c" stroke-width="1.1"/><path d="M3 7.500H10.500M2.500 8.500L6.200 13.500M11 8.500L7.500 13.500" fill="none" stroke="#e6e6e6" stroke-width="1.2"/><circle cx="2.5" cy="7.5" r="1.4" fill="#181818" stroke="#e6e6e6" stroke-width="1.1"/><circle cx="11" cy="7.5" r="1.4" fill="#181818" stroke="#e6e6e6" stroke-width="1.1"/><circle cx="6.8" cy="14" r="1.4" fill="#181818" stroke="#e6e6e6" stroke-width="1.1"/></g><text x="1464.2" y="507.2" fill="#e6e6e6">数据传递</text>
<g transform="translate(1442 517)"><rect x="2.5" y="2.5" width="11" height="11" fill="none" stroke="#8c8c8c" stroke-width="1.1"/><circle cx="2.3" cy="2.3" r="1.2" fill="#181818" stroke="#e6e6e6" stroke-width="1"/><circle cx="2.3" cy="13.7" r="1.2" fill="#181818" stroke="#e6e6e6" stroke-width="1"/><circle cx="13.7" cy="2.3" r="1.2" fill="#181818" stroke="#e6e6e6" stroke-width="1"/><circle cx="13.7" cy="13.7" r="1.2" fill="#181818" stroke="#e6e6e6" stroke-width="1"/><rect x="5.5" y="5.5" width="5" height="5" fill="none" stroke="#e6e6e6" stroke-width="1.5"/></g><text x="1464.2" y="529.2" fill="#e6e6e6">网格缓存</text>
<g transform="translate(1442 539)"><rect x="2.5" y="2.5" width="11" height="11" fill="none" stroke="#8c8c8c" stroke-width="1.1"/><circle cx="2.3" cy="2.3" r="1.2" fill="#181818" stroke="#e6e6e6" stroke-width="1"/><circle cx="2.3" cy="13.7" r="1.2" fill="#181818" stroke="#e6e6e6" stroke-width="1"/><circle cx="13.7" cy="2.3" r="1.2" fill="#181818" stroke="#e6e6e6" stroke-width="1"/><circle cx="13.7" cy="13.7" r="1.2" fill="#181818" stroke="#e6e6e6" stroke-width="1"/><rect x="5.5" y="5.5" width="5" height="5" fill="none" stroke="#e6e6e6" stroke-width="1.5"/></g><text x="1464.2" y="551.2" fill="#e6e6e6">网格序列缓存</text>
<g transform="translate(1442 561)"><rect x="1.5" y="8.5" width="7" height="6.5" fill="none" stroke="#8c8c8c" stroke-width="1.1"/><path d="M9.5 1.5V9.5M9.5 7.500L15 4.500M9.500 7.500L15 11" fill="none" stroke="#e6e6e6" stroke-width="1.2"/><circle cx="9.5" cy="7.5" r="1" fill="#e6e6e6" stroke="#e6e6e6" stroke-width="0.5"/></g><text x="1464.2" y="573.2" fill="#e6e6e6">法线编辑</text>
<g transform="translate(1442 583)"><rect x="1.5" y="8.5" width="7" height="6.5" fill="none" stroke="#8c8c8c" stroke-width="1.1"/><path d="M9.5 1.5V9.5M9.5 7.500L15 4.500M9.500 7.500L15 11" fill="none" stroke="#e6e6e6" stroke-width="1.2"/><circle cx="9.5" cy="7.5" r="1" fill="#e6e6e6" stroke="#e6e6e6" stroke-width="0.5"/></g><text x="1464.2" y="595.2" fill="#e6e6e6">加权法向</text>
<g transform="translate(1442 605)"><rect x="1" y="5.2" width="2.600" height="2.600" fill="#fff"/><rect x="1" y="10.4" width="2.600" height="2.600" fill="#fff"/><rect x="3.6" y="7.8" width="2.600" height="2.600" fill="#fff"/><rect x="3.6" y="13" width="2.600" height="2.600" fill="#fff"/><rect x="6.2" y="5.2" width="2.600" height="2.600" fill="#fff"/><rect x="6.2" y="10.4" width="2.600" height="2.600" fill="#fff"/><rect x="8.8" y="7.8" width="2.600" height="2.600" fill="#fff"/><rect x="8.8" y="13" width="2.600" height="2.600" fill="#fff"/><path d="M6.500 1.500H14.500V10H12.500" fill="none" stroke="#8c8c8c" stroke-width="1.1"/></g><text transform="translate(1464.2 617.2) scale(0.9 1)" fill="#e6e6e6">UV</text><text x="1482.4" y="617.2" fill="#e6e6e6">投射</text><path d="M1464.8 619.5H1470.2" stroke="#e6e6e6" stroke-width="1"/>
<g transform="translate(1442 627)"><rect x="1" y="5.2" width="2.600" height="2.600" fill="#fff"/><rect x="1" y="10.4" width="2.600" height="2.600" fill="#fff"/><rect x="3.6" y="7.8" width="2.600" height="2.600" fill="#fff"/><rect x="3.6" y="13" width="2.600" height="2.600" fill="#fff"/><rect x="6.2" y="5.2" width="2.600" height="2.600" fill="#fff"/><rect x="6.2" y="10.4" width="2.600" height="2.600" fill="#fff"/><rect x="8.8" y="7.8" width="2.600" height="2.600" fill="#fff"/><rect x="8.8" y="13" width="2.600" height="2.600" fill="#fff"/><path d="M6.500 1.500H14.500V10H12.500" fill="none" stroke="#8c8c8c" stroke-width="1.1"/></g><text transform="translate(1464.2 639.2) scale(0.9 1)" fill="#e6e6e6">UV</text><text x="1482.4" y="639.2" fill="#e6e6e6">偏移</text><path d="M1472.8 641.5H1478.2" stroke="#e6e6e6" stroke-width="1"/>
<g transform="translate(1442 649)"><path d="M1.500 2.500H3.700V8.500H1.500ZM12.300 2.500H14.500V8.500H12.300ZM3.700 4.500H12.300V6.500H3.700Z" fill="#e6e6e6"/><path d="M2.600 1H3.700V10H2.600ZM12.300 1H13.400V10H12.300Z" fill="#e6e6e6"/><rect x="1.8" y="11.8" width="2.7" height="2.7" fill="none" stroke="#8c8c8c" stroke-width="1.1"/><rect x="6.6" y="11.8" width="2.7" height="2.7" fill="none" stroke="#8c8c8c" stroke-width="1.1"/><rect x="11.5" y="11.8" width="2.7" height="2.7" fill="none" stroke="#8c8c8c" stroke-width="1.1"/><rect x="6.6" y="8.3" width="2.7" height="2" fill="none" stroke="#8c8c8c" stroke-width="0.9"/></g><text x="1464.2" y="661.2" fill="#e6e6e6">顶点权重编辑</text>
<g transform="translate(1442 671)"><path d="M1.500 2.500H3.700V8.500H1.500ZM12.300 2.500H14.500V8.500H12.300ZM3.700 4.500H12.300V6.500H3.700Z" fill="#e6e6e6"/><path d="M2.600 1H3.700V10H2.600ZM12.300 1H13.400V10H12.300Z" fill="#e6e6e6"/><rect x="1.8" y="11.8" width="2.7" height="2.7" fill="none" stroke="#8c8c8c" stroke-width="1.1"/><rect x="6.6" y="11.8" width="2.7" height="2.7" fill="none" stroke="#8c8c8c" stroke-width="1.1"/><rect x="11.5" y="11.8" width="2.7" height="2.7" fill="none" stroke="#8c8c8c" stroke-width="1.1"/><rect x="6.6" y="8.3" width="2.7" height="2" fill="none" stroke="#8c8c8c" stroke-width="0.9"/></g><text x="1464.2" y="683.2" fill="#e6e6e6">顶点权重混合</text>
<g transform="translate(1442 693)"><path d="M1.500 2.500H3.700V8.500H1.500ZM12.300 2.500H14.500V8.500H12.300ZM3.700 4.500H12.300V6.500H3.700Z" fill="#e6e6e6"/><path d="M2.600 1H3.700V10H2.600ZM12.300 1H13.400V10H12.300Z" fill="#e6e6e6"/><rect x="1.8" y="11.8" width="2.7" height="2.7" fill="none" stroke="#8c8c8c" stroke-width="1.1"/><rect x="6.6" y="11.8" width="2.7" height="2.7" fill="none" stroke="#8c8c8c" stroke-width="1.1"/><rect x="11.5" y="11.8" width="2.7" height="2.7" fill="none" stroke="#8c8c8c" stroke-width="1.1"/><rect x="6.6" y="8.3" width="2.7" height="2" fill="none" stroke="#8c8c8c" stroke-width="0.9"/></g><text x="1464.2" y="705.2" fill="#e6e6e6">顶点权重邻近</text>
<text x="1566.5" y="474.3" fill="#8e8e8e">生成</text>
<g transform="translate(1568 495)"><rect x="1.5" y="6" width="2.8" height="9" fill="none" stroke="#8c8c8c" stroke-width="1.1"/><rect x="6.5" y="3.5" width="2.8" height="9" fill="none" stroke="#e6e6e6" stroke-width="1.1"/><rect x="11.5" y="1.5" width="2.8" height="9" fill="none" stroke="#e6e6e6" stroke-width="1.1"/></g><text x="1590.2" y="507.2" fill="#e6e6e6">阵列</text>
<g transform="translate(1568 517)"><path d="M1.500 7V1.500H7" fill="none" stroke="#8c8c8c" stroke-width="1.1"/><path d="M1.500 14.500V8.500L8.500 1.500H14.500V14.500Z" fill="none" stroke="#e6e6e6" stroke-width="1.2"/></g><text x="1590.2" y="529.2" fill="#e6e6e6">倒角</text>
<g transform="translate(1568 539)"><rect x="1.5" y="1.5" width="6" height="6" fill="none" stroke="#8c8c8c" stroke-width="1.1"/><path d="M3.500 9.500H9.500V3.500H14.500V14.500H3.500Z" fill="none" stroke="#e6e6e6" stroke-width="1.2"/></g><text x="1590.2" y="551.2" fill="#e6e6e6">布尔</text>
<g transform="translate(1568 561)"><rect x="10.5" y="1.5" width="4.5" height="3" fill="none" stroke="#8c8c8c" stroke-width="1.1"/><path d="M1.500 6H7V9H1.500ZM1.500 9H4.500V12H1.500ZM4.500 9H10V12H4.500ZM10 9H14.500V12H10ZM7 6.500V9M1.500 12H7V14.500H1.500ZM7 12H12V14.500H7ZM12 12H14.500V14.500H12Z" fill="none" stroke="#e6e6e6" stroke-width="1.2"/></g><text x="1590.2" y="573.2" fill="#e6e6e6">建形</text>
<g transform="translate(1568 583)"><path d="M1.500 7H6.500V1.500" fill="none" stroke="#8c8c8c" stroke-width="1.1"/><rect x="1.5" y="1.5" width="13" height="13" fill="none" stroke="#e6e6e6" stroke-width="1.2"/><path d="M1.500 14.500L14.500 1.500" fill="none" stroke="#e6e6e6" stroke-width="1.2"/></g><text x="1590.2" y="595.2" fill="#e6e6e6">精简</text>
<g transform="translate(1568 605)"><rect x="4.5" y="4.5" width="10" height="10" fill="none" stroke="#8c8c8c" stroke-width="1.1"/><path d="M1.500 3V15M4.500 1.500H15" fill="none" stroke="#e6e6e6" stroke-width="1.2"/></g><text x="1590.2" y="617.2" fill="#e6e6e6">拆边</text>
<g transform="translate(1568 627)"><circle cx="12" cy="11.5" r="3.3" fill="#e6e6e6" stroke="#e6e6e6" stroke-width="0"/><circle cx="5.2" cy="8.5" r="2.3" fill="#c4c4c4" stroke="#c4c4c4" stroke-width="0"/><circle cx="8.3" cy="3.8" r="1.7" fill="#9a9a9a" stroke="#9a9a9a" stroke-width="0"/><circle cx="3" cy="2.5" r="1.3" fill="#7a7a7a" stroke="#7a7a7a" stroke-width="0"/></g><text x="1590.2" y="639.2" fill="#e6e6e6">几何节点</text>
<g transform="translate(1568 649)"><path d="M5 6A5 5 0 1 0 11.500 12.500" fill="none" stroke="#8c8c8c" stroke-width="1.1"/><circle cx="10.3" cy="5.7" r="4" fill="none" stroke="#e6e6e6" stroke-width="1.2"/><path d="M7.500 8.500A4 4 0 0 0 13.100 2.900Z" fill="#e6e6e6"/></g><text x="1590.2" y="661.2" fill="#e6e6e6">遮罩</text>
<g transform="translate(1568 671)"><path d="M8 1V15" fill="none" stroke="#e6e6e6" stroke-width="1" stroke-dasharray="2 1.300"/><path d="M6 2.500Q1.500 1 2 4.500Q2.500 7 4 8Q1.500 9.500 1.500 12Q2 15 6 13.500" fill="none" stroke="#8c8c8c" stroke-width="1.1"/><path d="M10 2.500Q14.500 1 14 4.500Q13.500 7 12 8Q14.500 9.500 14.500 12Q14 15 10 13.500" fill="none" stroke="#e6e6e6" stroke-width="1.2"/></g><text x="1590.2" y="683.2" fill="#e6e6e6">镜像</text>
<g transform="translate(1568 693)"><rect x="1.5" y="1.5" width="13" height="13" fill="none" stroke="#8c8c8c" stroke-width="1.1"/><path d="M1.500 8H14.500M1.500 11.500H14.500M8 1.500V14.500M11.500 1.500V14.500M1.500 14.500H14.500M14.500 1.500V14.500" fill="none" stroke="#e6e6e6" stroke-width="1.1"/></g><text x="1590.2" y="705.2" fill="#e6e6e6">多级精度</text>
<g transform="translate(1568 715)"><path d="M6.500 1.500A6.600 6.600 0 0 0 6.500 14.500" fill="none" stroke="#8c8c8c" stroke-width="1.1"/><path d="M8.500 1.500H12V14.500H8.500ZM12 5.500H14.500V10.500H12M8.500 8H12" fill="none" stroke="#e6e6e6" stroke-width="1.2"/></g><text x="1590.2" y="727.2" fill="#e6e6e6">重构网格</text>
<g transform="translate(1568 737)"><path d="M2 3.500Q8 7 13 3.500Q15 1.500 14.500 1M14 4Q16 8 8 8.500Q1 8 2 5Q3 2 9 3.500M14 9Q16 13.500 8 14Q1 13.500 2 10.500Q3 8 8 8.500" fill="none" stroke="#e6e6e6" stroke-width="1.1"/></g><text x="1590.2" y="749.2" fill="#e6e6e6">螺旋</text>
<g transform="translate(1568 759)"><path d="M9.500 1.500H12.500Q14.500 1.500 14.500 3.500V11.500Q14.500 14.500 11.500 14.500H4.500Q1.500 14.500 1.500 11.800Q1.500 9 4.500 9H8V3Q8 1.500 9.500 1.500ZM4.500 11.800H11.500V4.500" fill="none" stroke="#e6e6e6" stroke-width="1.1"/></g><text x="1590.2" y="771.2" fill="#e6e6e6">蒙皮</text>
<g transform="translate(1568 781)"><path d="M4.500 4.500L7.500 1.500H14.500V10.500L11.500 13.500" fill="none" stroke="#8c8c8c" stroke-width="1.1"/><path d="M1.500 4.500H11.500V13.500H1.500" fill="none" stroke="#e6e6e6" stroke-width="1.2"/><path d="M11.500 9L15 11.500L11.500 14Z" fill="#e6e6e6"/></g><text x="1590.2" y="793.2" fill="#e6e6e6">实体化</text>
<g transform="translate(1568 825)"><path d="M6 1.500H1.500V14.500H6" fill="none" stroke="#8c8c8c" stroke-width="1.1"/><path d="M9.500 1.500H14.500V14.500H7.500ZM14.500 1.500L9 14.500" fill="none" stroke="#e6e6e6" stroke-width="1.2"/></g><text x="1590.2" y="837.2" fill="#e6e6e6">三角化</text>
<g transform="translate(1568 847)"><path d="M4.500 14Q1 14 1.500 11Q2 8.500 4 8.500Q3 5 6 3Q9.500 1 11.500 4.500Q15 5 14.500 8.500Q15.500 12.500 11.500 12.500Q9 15 6.500 12.500Q6 14 4.500 14Z" fill="none" stroke="#e6e6e6" stroke-width="1.2"/></g><text x="1590.2" y="859.2" fill="#e6e6e6">体积</text><text transform="translate(1615.5 859.2) scale(0.9 1)" fill="#e6e6e6">-&gt;</text><text x="1630.7" y="859.2" fill="#e6e6e6">网格</text>
<g transform="translate(1568 869)"><path d="M3.500 12Q2 7 8 4Q11 2.500 12.500 3.500M5 13.500Q11 14 13.500 6" fill="none" stroke="#8c8c8c" stroke-width="1.1" stroke-dasharray="2 1.500"/><rect x="1.5" y="11.5" width="3" height="3" fill="none" stroke="#e6e6e6" stroke-width="1.1"/><rect x="11.5" y="1.5" width="3" height="3" fill="none" stroke="#8c8c8c" stroke-width="1.1"/></g><text x="1590.2" y="881.2" fill="#e6e6e6">焊接</text>
<g transform="translate(1568 891)"><path d="M1.500 4.500H11.500V14.500H1.500ZM1.500 4.500L4.500 1.500H14.500V11.500L11.500 14.500M11.500 4.500L14.500 1.500" fill="none" stroke="#e6e6e6" stroke-width="1.2"/><path d="M4.500 7V11.500H9" fill="none" stroke="#8c8c8c" stroke-width="1" stroke-dasharray="1.500 1.500"/></g><text x="1590.2" y="903.2" fill="#e6e6e6">线框</text>
<text x="1688.5" y="474.3" fill="#8e8e8e">形变</text>
<g transform="translate(1690 495)"><circle cx="8.7" cy="2.8" r="1.3" fill="#e6e6e6" stroke="#e6e6e6" stroke-width="0.4"/><path d="M8.500 4V9L4.500 14.500M8.500 9L12 14.500M2 4.500L8.500 6L12.500 3.500" fill="none" stroke="#e6e6e6" stroke-width="1.2"/><path d="M14.500 1.500Q12.500 2 13 4Q14 5 15 4.500" fill="none" stroke="#e6e6e6" stroke-width="1"/></g><text x="1712.2" y="507.2" fill="#e6e6e6">骨架</text>
<g transform="translate(1690 517)"><path d="M1.500 14.500V8A6.500 6.500 0 1 1 8 14.500Z" fill="none" stroke="#e6e6e6" stroke-width="1.2"/><path d="M4.500 14V9.500H9V14" fill="none" stroke="#8c8c8c" stroke-width="1.1"/></g><text x="1712.2" y="529.2" fill="#e6e6e6">铸型</text>
<g transform="translate(1690 539)"><path d="M6 1.500C17 1.500 17.500 13.500 1.500 14.500" fill="none" stroke="#e6e6e6" stroke-width="1.2"/></g><text x="1712.2" y="551.2" fill="#e6e6e6">曲线</text>
<g transform="translate(1690 561)"><path d="M2 8V1.500H14.500L3 9.500L14.500 8.500V11L2 14.500V11.500" fill="none" stroke="#e6e6e6" stroke-width="1.2"/></g><text x="1712.2" y="573.2" fill="#e6e6e6">置换</text>
<g transform="translate(1690 583)"><circle cx="8.5" cy="2.8" r="1.4" fill="none" stroke="#e6e6e6" stroke-width="1.1"/><path d="M8.500 4.200V8.500Q13 10.500 11.500 13Q9 16 4.500 13V10" fill="none" stroke="#e6e6e6" stroke-width="1.2"/></g><text x="1712.2" y="595.2" fill="#e6e6e6">钩挂</text>
<g transform="translate(1690 605)"><rect x="2.5" y="2.5" width="11" height="11" fill="none" stroke="#8c8c8c" stroke-width="1.1"/><circle cx="2.3" cy="2.3" r="1.2" fill="#181818" stroke="#e6e6e6" stroke-width="1"/><circle cx="2.3" cy="13.7" r="1.2" fill="#181818" stroke="#e6e6e6" stroke-width="1"/><circle cx="13.7" cy="2.3" r="1.2" fill="#181818" stroke="#e6e6e6" stroke-width="1"/><circle cx="13.7" cy="13.7" r="1.2" fill="#181818" stroke="#e6e6e6" stroke-width="1"/><rect x="5.5" y="5.5" width="5" height="5" fill="none" stroke="#e6e6e6" stroke-width="1.5"/></g><text x="1712.2" y="617.2" fill="#e6e6e6">拉普拉斯形变</text>
<g transform="translate(1690 627)"><path d="M4.500 1.500H15L11.500 14.500H1.500ZM9.700 1.500L6.500 14.500M3.200 8H13.200" fill="none" stroke="#e6e6e6" stroke-width="1.2"/></g><text x="1712.2" y="639.2" fill="#e6e6e6">晶格</text>
<g transform="translate(1690 649)"><rect x="2.5" y="2.5" width="11" height="11" fill="none" stroke="#8c8c8c" stroke-width="1.1"/><circle cx="2.3" cy="2.3" r="1.2" fill="#181818" stroke="#e6e6e6" stroke-width="1"/><circle cx="2.3" cy="13.7" r="1.2" fill="#181818" stroke="#e6e6e6" stroke-width="1"/><circle cx="13.7" cy="2.3" r="1.2" fill="#181818" stroke="#e6e6e6" stroke-width="1"/><circle cx="13.7" cy="13.7" r="1.2" fill="#181818" stroke="#e6e6e6" stroke-width="1"/><rect x="5.5" y="5.5" width="5" height="5" fill="none" stroke="#e6e6e6" stroke-width="1.5"/></g><text x="1712.2" y="661.2" fill="#e6e6e6">网格形变</text>
<g transform="translate(1690 671)"><path d="M0.500 14.500H3.500V7.500A4.500 4.500 0 0 1 12.500 7.500V14.500H15.500" fill="none" stroke="#e6e6e6" stroke-width="1.2"/><circle cx="8" cy="7.3" r="2.2" fill="none" stroke="#8c8c8c" stroke-width="1.1"/></g><text x="1712.2" y="683.2" fill="#e6e6e6">缩裹</text>
<g transform="translate(1690 693)"><path d="M3 1.500V6.500" fill="none" stroke="#8c8c8c" stroke-width="1.1"/><path d="M3 14.500V11Q3.500 4.500 11 3.500H14.500V7H11.500Q6.500 7.500 6.500 13V14.500Z" fill="none" stroke="#e6e6e6" stroke-width="1.2"/></g><text x="1712.2" y="705.2" fill="#e6e6e6">简易形变</text>
<g transform="translate(1690 715)"><path d="M1.500 15V10H4.500V5.500H8V2.500H15" fill="none" stroke="#8c8c8c" stroke-width="1"/><path d="M4.500 15Q5.500 5.500 15 4.500" fill="none" stroke="#e6e6e6" stroke-width="1.2"/></g><text x="1712.2" y="727.2" fill="#e6e6e6">平滑</text>
<g transform="translate(1690 737)"><path d="M1.500 15V10H4.500V5.500H8V2.500H15" fill="none" stroke="#8c8c8c" stroke-width="1"/><path d="M4.500 15Q5.500 5.500 15 4.500" fill="none" stroke="#e6e6e6" stroke-width="1.2"/></g><text x="1712.2" y="749.2" fill="#e6e6e6">矫正平滑</text>
<g transform="translate(1690 759)"><path d="M1.500 15V10H4.500V5.500H8V2.500H15" fill="none" stroke="#8c8c8c" stroke-width="1"/><path d="M4.500 15Q5.500 5.500 15 4.500" fill="none" stroke="#e6e6e6" stroke-width="1.2"/></g><text x="1712.2" y="771.2" fill="#e6e6e6">拉普拉斯平滑</text>
<g transform="translate(1690 781)"><rect x="2.5" y="2.5" width="11" height="11" fill="none" stroke="#8c8c8c" stroke-width="1.1"/><circle cx="2.3" cy="2.3" r="1.2" fill="#181818" stroke="#e6e6e6" stroke-width="1"/><circle cx="2.3" cy="13.7" r="1.2" fill="#181818" stroke="#e6e6e6" stroke-width="1"/><circle cx="13.7" cy="2.3" r="1.2" fill="#181818" stroke="#e6e6e6" stroke-width="1"/><circle cx="13.7" cy="13.7" r="1.2" fill="#181818" stroke="#e6e6e6" stroke-width="1"/><rect x="5.5" y="5.5" width="5" height="5" fill="none" stroke="#e6e6e6" stroke-width="1.5"/></g><text x="1712.2" y="793.2" fill="#e6e6e6">表面形变</text>
<g transform="translate(1690 803)"><path d="M1.500 14.500V4.500H7.500" fill="none" stroke="#8c8c8c" stroke-width="1.1"/><path d="M1.500 14.500H10.500V10M7.500 4.500Q9.500 1.500 12.500 2Q15 3.500 13 6.500L10.500 9" fill="none" stroke="#e6e6e6" stroke-width="1.2"/></g><text x="1712.2" y="815.2" fill="#e6e6e6">弯绕</text>
<g transform="translate(1690 825)"><path d="M1.500 15A13 13 0 0 1 14.500 2M5 15A9.500 9.500 0 0 1 14.500 5.500M8.500 15A6 6 0 0 1 14.500 9" fill="none" stroke="#e6e6e6" stroke-width="1.2"/><circle cx="13" cy="13.5" r="1.1" fill="#e6e6e6" stroke="#e6e6e6" stroke-width="0.2"/></g><text x="1712.2" y="837.2" fill="#e6e6e6">波浪</text>
<text x="1814.5" y="474.3" fill="#8e8e8e">物理</text>
<g transform="translate(1816 495)"><path d="M5.500 1.500Q8 4.500 10.500 1.500L14.500 3.500V7.500H12V14.500H4V7.500H1.500V3.500Z" fill="none" stroke="#e6e6e6" stroke-width="1.3"/></g><text x="1838.2" y="507.2" fill="#e6e6e6">布料</text>
<g transform="translate(1816 517)"><path d="M8 1.500H14.500V7L11.500 8.500L10 6L8 7ZM1.500 9H5.500L7 11L9.500 10V14.500H1.500Z" fill="none" stroke="#e6e6e6" stroke-width="1.2"/><path d="M2 2.500L4.500 5M5 1.500L6 4M13 10.500L14.500 12.500M11.500 11.500L12.500 14.500" fill="none" stroke="#8c8c8c" stroke-width="1"/></g><text x="1838.2" y="529.2" fill="#e6e6e6">碰撞</text>
<g transform="translate(1816 539)"><path d="M2 14Q0.500 9 4 7Q7 5 9.500 6Q13 5.500 14.500 7.500Q15.500 10 12 10.500Q9 10.500 8 12.500Q6 16 2 14Z" fill="none" stroke="#e6e6e6" stroke-width="1.2"/><path d="M6 2.500H8V4.500H6ZM9.500 1.500H11.500V3.500H9.500ZM13 3H15V5H13Z" fill="#e6e6e6"/></g><text x="1838.2" y="551.2" fill="#e6e6e6">动态绘画</text>
<g transform="translate(1816 561)"><path d="M4 1.500H12.500L9.500 5H1.500Z" fill="#c8c8c8"/><rect x="1.7" y="8.2" width="6" height="6.3" fill="none" stroke="#e6e6e6" stroke-width="1.4"/><path d="M10.500 9.500L14.500 5.500V11L10.500 14.500Z" fill="none" stroke="#e6e6e6" stroke-width="1.2"/></g><text x="1838.2" y="573.2" fill="#e6e6e6">爆破</text>
<g transform="translate(1816 583)"><path d="M8 1.500Q13 8 13 10.500Q13 14.500 8 14.500Q3 14.500 3 10.500Q3 8 8 1.500Z" fill="none" stroke="#e6e6e6" stroke-width="1.2"/><path d="M5.500 10.500Q5.500 12.500 7.500 12.500" fill="none" stroke="#8c8c8c" stroke-width="1"/></g><text x="1838.2" y="595.2" fill="#e6e6e6">流体</text>
<g transform="translate(1816 605)"><path d="M1.500 4Q3.500 1 5.500 3.500Q8 6 10 3.500Q12 1 14.500 4M1.500 9Q3.500 6 5.500 8.500Q8 11 10 8.500Q12 6 14.500 9M1.500 14Q3.500 11 5.500 13.500Q8 16 10 13.500Q12 11 14.500 14" fill="none" stroke="#e6e6e6" stroke-width="1.2"/></g><text x="1838.2" y="617.2" fill="#e6e6e6">洋面</text>
<g transform="translate(1816 627)"><path d="M3 2.500H9.500M2.500 3.500V8M7.500 6L13.500 6.500M7.500 6.500L6.500 13M8 7L13 12.500" fill="none" stroke="#e6e6e6" stroke-width="1.1"/><circle cx="2.5" cy="2.5" r="1.3" fill="#181818" stroke="#8c8c8c" stroke-width="1"/><circle cx="10.5" cy="2.5" r="1.3" fill="#181818" stroke="#8c8c8c" stroke-width="1"/><circle cx="2.5" cy="9" r="1.3" fill="#181818" stroke="#8c8c8c" stroke-width="1"/><circle cx="7.3" cy="6.2" r="1.9" fill="#e6e6e6" stroke="#e6e6e6" stroke-width="0"/><circle cx="14" cy="6.5" r="1.5" fill="#e6e6e6" stroke="#e6e6e6" stroke-width="0"/><circle cx="6.3" cy="13.5" r="1.6" fill="#e6e6e6" stroke="#e6e6e6" stroke-width="0"/><circle cx="13.5" cy="13" r="1.6" fill="#e6e6e6" stroke="#e6e6e6" stroke-width="0"/></g><text x="1838.2" y="639.2" fill="#e6e6e6">粒子实例</text>
<g transform="translate(1816 649)"><path d="M4.500 3H12.500M3 5V12M4.500 4.500L12.500 12.500" fill="none" stroke="#e6e6e6" stroke-width="1.1"/><circle cx="3" cy="3" r="2" fill="#181818" stroke="#e6e6e6" stroke-width="1.1"/><circle cx="13.5" cy="3" r="1.4" fill="#181818" stroke="#e6e6e6" stroke-width="1.1"/><circle cx="3" cy="13.5" r="1.4" fill="#181818" stroke="#e6e6e6" stroke-width="1.1"/><circle cx="13.5" cy="13.5" r="1.6" fill="#181818" stroke="#e6e6e6" stroke-width="1.1"/></g><text x="1838.2" y="661.2" fill="#e6e6e6">粒子系统</text>
<g transform="translate(1816 671)"><path d="M2 14.500Q0 7 6 3Q11 0 14.500 3.500Q15.500 6.500 9 9Q4.500 11.500 2 14.500ZM3 13.500L12 4" fill="none" stroke="#e6e6e6" stroke-width="1.2"/><path d="M14.500 9.500Q10.500 8.500 10.500 10.500Q10.500 12 13 12.500Q15.500 13 14 14.500Q12.500 15.500 10 14.500" fill="none" stroke="#e6e6e6" stroke-width="1.1"/></g><text x="1838.2" y="683.2" fill="#e6e6e6">软体</text>
<rect x="1557.5" y="791.5" width="105" height="37" fill="#181818" stroke="#ee3a3a" stroke-width="3"/>
<g transform="translate(1568 803)"><rect x="1.5" y="1.5" width="13" height="13" fill="none" stroke="#8c8c8c" stroke-width="1"/><circle cx="8" cy="8" r="4.6" fill="none" stroke="#e6e6e6" stroke-width="1.3"/></g><text x="1590.2" y="815.2" fill="#e6e6e6">表面细分</text></svg>
<svg width="1928" height="1048" viewBox="0 0 1928 1048" font-family='"DejaVu Sans","Liberation Sans","WenQuanYi Zen Hei","Noto Sans CJK SC",sans-serif' font-size="11"><defs><filter id="fGl" x="-10%" y="-30%" width="120%" height="160%"><feGaussianBlur stdDeviation="2.2"/></filter><filter id="fBl" x="-5%" y="-20%" width="110%" height="140%"><feGaussianBlur stdDeviation="0.9"/></filter></defs>
<text x="1100.500" y="638.500" font-size="29" fill="#ee3838" font-family='"Noto Sans CJK SC","WenQuanYi Zen Hei",sans-serif'>添加表面细分修改器</text>
<rect x="1013" y="723.5" width="368" height="89" fill="none" stroke="#3f8ae0" stroke-width="4" opacity="0.9" filter="url(#fGl)"/>
<rect x="1013" y="723.5" width="368" height="89" fill="#181818" stroke="#2a5a9a" stroke-width="1"/>
<g filter="url(#fBl)">
<path d="M1380.5 745H1058Q1049.500 745 1049.500 753.500V792Q1049.500 800.500 1058 800.500H1380.5Z" fill="#4772b3"/>
<rect x="1075" y="752" width="41.500" height="41.500" fill="none" stroke="#c9d3e6" stroke-width="2"/>
<circle cx="1095.700" cy="772.700" r="14.500" fill="none" stroke="#ffffff" stroke-width="3.2"/>
<path d="M1074 725H1098M1106 723.500V727" stroke="#cfcfcf" stroke-width="2.5"/>
<text x="1139" y="785.800" font-size="33" fill="#2d4a78" opacity="0.6" font-family='"WenQuanYi Zen Hei","Noto Sans CJK SC",sans-serif'>表面细分</text>
<text x="1138" y="784.500" font-size="33" fill="#f4f6fa" stroke="#f4f6fa" stroke-width="0.8" font-family='"WenQuanYi Zen Hei","Noto Sans CJK SC",sans-serif'>表面细分</text>
</g></svg>
</body></html>
